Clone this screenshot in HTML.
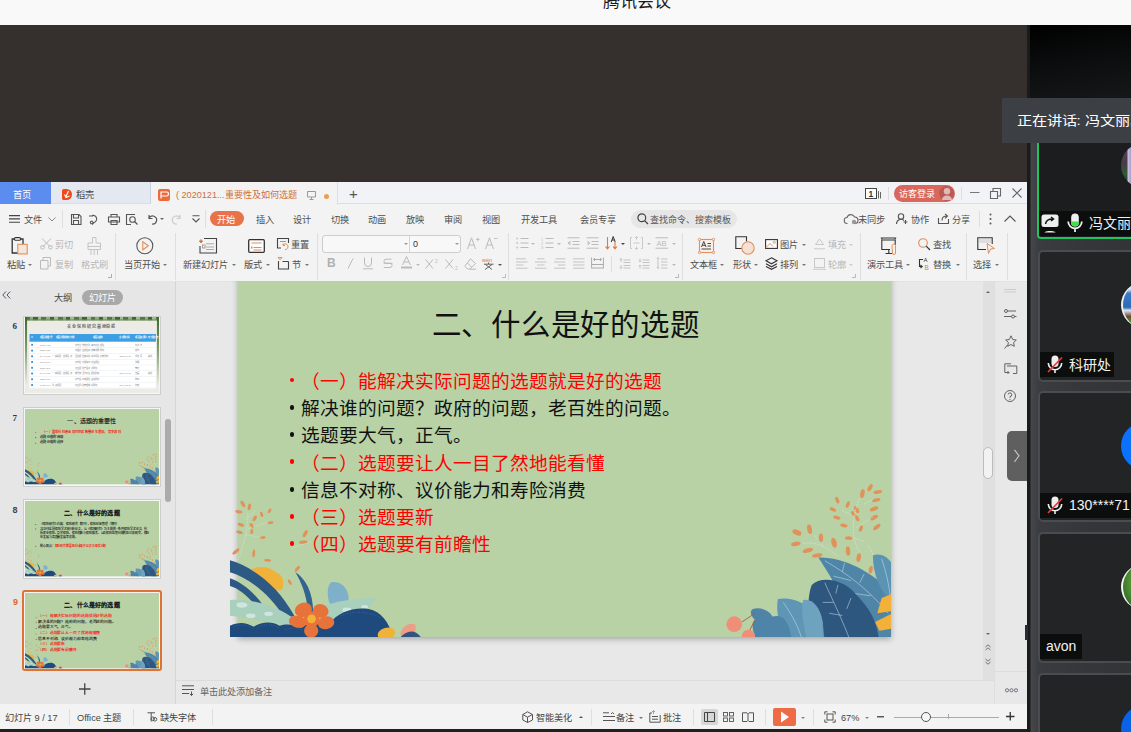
<!DOCTYPE html>
<html lang="zh-CN"><head><meta charset="utf-8">
<style>
*{box-sizing:border-box;margin:0;padding:0}
html,body{width:1131px;height:732px;overflow:hidden;background:#35302d;font-family:"Liberation Sans",sans-serif}
.a{position:absolute}
.t{position:absolute;white-space:nowrap;line-height:1}
.ui{font-size:9.2px;color:#4e4e4e;padding-top:1px}
.g{color:#b8b8b8}
.sep{position:absolute;width:1px;background:#dedede}
.dd{position:absolute;width:0;height:0;border-left:2px solid transparent;border-right:2px solid transparent;border-top:2px solid #777}
svg{position:absolute;overflow:visible}
</style></head><body>

<!-- top bar -->
<div class="a" style="left:0;top:0;width:1131px;height:25px;background:#f9f9f9"></div>
<div class="t" style="left:603px;top:-7px;font-size:17px;color:#1a1a1a">腾讯会议</div>
<!-- WPS -->
<div class="a" style="left:0;top:182px;width:1027px;height:546px;background:#f3f3f3"></div>
<!-- tab bar -->
<div class="a" style="left:0;top:182px;width:1027px;height:22px;background:#f2f3f7;border-bottom:1px solid #d9dee8"></div>
<div class="a" style="left:0;top:182px;width:51px;height:22px;background:#5b8cf0"></div>
<div class="t ui" style="left:13px;top:189.5px;color:#fff">首页</div>
<div class="a" style="left:51px;top:182px;width:100px;height:22px;background:#e4e8f0;border-right:1px solid #cdd3de;border-bottom:1px solid #d9dee8"></div>
<div class="a" style="left:62px;top:189px;width:10px;height:11px;background:#ef4a1c;border-radius:2px 6px 6px 2px"></div><svg style="left:62px;top:189px" width="10" height="11"><path d="M6.5 2L4 7.5M2.5 5.5L4 8.5L7.5 7" stroke="#fff" stroke-width="1.1" fill="none"/></svg>
<div class="t ui" style="left:76px;top:189.5px;color:#444">稻壳</div>
<div class="a" style="left:151px;top:182px;width:187px;height:23px;background:#f3f3f3;border-right:1px solid #d9dee8"></div>
<div class="a" style="left:158px;top:189px;width:12px;height:12px;background:#ec6a3e;border-radius:2px"></div><svg style="left:158px;top:189px" width="12" height="12"><path d="M3 9.5V3H8.5A2 2 0 0 1 8.5 7H3" stroke="#fff" stroke-width="1.2" fill="none"/></svg>
<div class="t ui" style="left:176px;top:190px;color:#d0703a;font-size:9.1px">( 2020121...重要性及如何选题</div>
<div class="a" style="left:324px;top:193.5px;width:5px;height:5px;border-radius:50%;background:#e8a050"></div>
<div class="t" style="left:349px;top:186px;font-size:15px;color:#555">+</div>
<!-- right of tab bar -->
<div class="a" style="left:894px;top:184.5px;width:61px;height:17.5px;background:#d9675a;border-radius:9px"></div>
<div class="t ui" style="left:898.5px;top:189px;color:#fff;font-size:9px">访客登录</div>
<div class="a" style="left:939px;top:186px;width:15px;height:15px;background:#b95a55;border-radius:50%"></div>
<div class="sep" style="left:888px;top:187px;height:13px"></div>
<div class="sep" style="left:961px;top:187px;height:13px"></div>

<!-- menu row -->
<div class="t ui" style="left:24px;top:215px">文件</div>
<div class="t ui" style="left:256px;top:215px">插入</div>
<div class="t ui" style="left:293px;top:215px">设计</div>
<div class="t ui" style="left:331px;top:215px">切换</div>
<div class="t ui" style="left:368px;top:215px">动画</div>
<div class="t ui" style="left:406px;top:215px">放映</div>
<div class="t ui" style="left:444px;top:215px">审阅</div>
<div class="t ui" style="left:482px;top:215px">视图</div>
<div class="t ui" style="left:521px;top:215px">开发工具</div>
<div class="t ui" style="left:580px;top:215px">会员专享</div>
<div class="a" style="left:210px;top:211px;width:34px;height:15px;background:#e8734a;border-radius:8px"></div>
<div class="t ui" style="left:217px;top:215px;color:#fff">开始</div>


<!-- menu row icons -->
<svg style="left:9px;top:215px" width="12" height="9"><path d="M0 .6H11M0 3.9H11M0 7.2H11" stroke="#444" stroke-width="1.1"/></svg>
<svg style="left:48px;top:217px" width="8" height="5"><path d="M.5 .5L4 4L7.5 .5" stroke="#888" fill="none" stroke-width="1"/></svg>
<div class="sep" style="left:62px;top:210px;height:18px"></div>
<svg style="left:70px;top:214px" width="12" height="11"><path d="M1.5 .5H9L11 2.5V10.5H1.5Z M3.5 .5V4H8.5V.5 M3.5 10.5V6.5H8.5V10.5" stroke="#555" fill="none" stroke-width="1.1"/></svg>
<svg style="left:89px;top:214px" width="11" height="11"><path d="M3 1.5A3.5 3.5 0 1 1 5 8.5M5 8.5L3 10.5 M0 2H4M3.5 7.5A1.3 1.3 0 1 0 3.6 7.6" stroke="#555" fill="none" stroke-width="1.1"/></svg>
<svg style="left:108px;top:214px" width="12" height="11"><path d="M3 3V.5H9V3 M.5 3H11.5V8H.5Z M3 6.5H9V10.5H3Z" stroke="#555" fill="none" stroke-width="1.1"/></svg>
<svg style="left:126px;top:214px" width="13" height="11"><path d="M9 .5H.5V10.5H5" stroke="#555" fill="none" stroke-width="1.1"/><circle cx="6.5" cy="5.5" r="2.8" stroke="#555" fill="none" stroke-width="1.1"/><path d="M8.5 7.5L11.5 10.5" stroke="#555" stroke-width="1.2"/></svg>
<svg style="left:147px;top:214px" width="10" height="11"><path d="M2 1V4.5H5.5 M2 4.3A4 4 0 1 1 5 10" stroke="#555" fill="none" stroke-width="1.2"/></svg>
<div class="dd" style="left:160px;top:218px;border-top-color:#666"></div>
<svg style="left:172px;top:214px" width="10" height="11"><path d="M8 1V4.5H4.5 M8 4.3A4 4 0 1 0 5 10" stroke="#ccc" fill="none" stroke-width="1.2"/></svg>
<svg style="left:192px;top:215px" width="8" height="8"><path d="M.5 .8H7.5 M.5 3.5L4 7L7.5 3.5" stroke="#555" fill="none" stroke-width="1.1"/></svg>
<div class="sep" style="left:205px;top:210px;height:18px"></div>
<!-- search pill -->
<div class="a" style="left:631px;top:210px;width:106px;height:18px;background:#e6e6e6;border-radius:9px"></div>
<svg style="left:637px;top:213px" width="12" height="12"><circle cx="4.8" cy="4.8" r="3.9" stroke="#444" fill="none" stroke-width="1.2"/><path d="M7.6 7.6L11 11" stroke="#444" stroke-width="1.3"/></svg>
<div class="t ui" style="left:650px;top:215px;color:#555;font-size:9px">查找命令、搜索模板</div>
<!-- right menu -->
<svg style="left:844px;top:213px" width="14" height="12"><path d="M3.5 10.5A3 3 0 0 1 3 4.5A4 4 0 0 1 10.5 4A3 3 0 0 1 11 10.5" stroke="#666" fill="none" stroke-width="1.1"/><circle cx="10" cy="9" r="2.2" fill="#999"/></svg>
<div class="t ui" style="left:858px;top:215px">未同步</div>
<svg style="left:896px;top:213px" width="12" height="12"><circle cx="5" cy="3.5" r="2.7" stroke="#555" fill="none" stroke-width="1.1"/><path d="M.5 11A4.5 4.5 0 0 1 8 7.5 M9.5 7V11 M7.5 9H11.5" stroke="#555" fill="none" stroke-width="1.1"/></svg>
<div class="t ui" style="left:911px;top:215px">协作</div>
<svg style="left:938px;top:213px" width="12" height="11"><path d="M.5 5V10.5H10.5V6 M4 7.5C4 4 6 3 9 3 M7 .8L9.5 3L7 5.3" stroke="#555" fill="none" stroke-width="1.1"/></svg>
<div class="t ui" style="left:952px;top:215px">分享</div>
<div class="sep" style="left:979px;top:211px;height:16px"></div>
<svg style="left:989px;top:213px" width="3" height="12"><circle cx="1.5" cy="1.5" r="1" fill="#555"/><circle cx="1.5" cy="6" r="1" fill="#555"/><circle cx="1.5" cy="10.5" r="1" fill="#555"/></svg>
<svg style="left:1004px;top:215px" width="12" height="7"><path d="M.5 6.5L6 1L11.5 6.5" stroke="#555" fill="none" stroke-width="1.1"/></svg>
<!-- tab bar right icons -->
<svg style="left:865px;top:188px" width="17" height="11"><rect x=".5" y=".5" width="11" height="10" stroke="#444" fill="#fff" stroke-width="1"/><text x="3.5" y="9" font-size="8.5" font-family="Liberation Sans" font-weight="bold" fill="#333">1</text><path d="M13.5 3V10.5M15.5 4V10.5" stroke="#666" stroke-width="1"/></svg>
<svg style="left:941px;top:187px" width="12" height="14"><circle cx="6" cy="4.3" r="3.2" fill="#e2b9b9"/><path d="M1 13A5 4.5 0 0 1 11 13Z" fill="#e2b9b9"/></svg>
<svg style="left:970px;top:192px" width="10" height="2"><path d="M0 .5H9.5" stroke="#777" stroke-width="1"/></svg>
<svg style="left:990px;top:188px" width="11" height="11"><path d="M.5 3.5H7.5V10.5H.5Z M3 3.5V.5H10.5V8H7.5" stroke="#666" fill="none" stroke-width="1.1"/></svg>
<svg style="left:1012px;top:188px" width="10" height="10"><path d="M.5 .5L9.5 9.5M9.5 .5L.5 9.5" stroke="#666" stroke-width="1.1"/></svg>
<svg style="left:307px;top:191px" width="9" height="9"><path d="M.5 .5H8.5V6H.5Z M4.5 6V8 M2.5 8.5H6.5" stroke="#999" fill="none" stroke-width="1"/></svg>


<!-- ===== TOOLBAR ===== -->
<!-- group1 clipboard -->
<svg style="left:11px;top:237px" width="17" height="18"><path d="M3 2H1.2V16H7" stroke="#333" fill="none" stroke-width="1.3"/><path d="M10 2H12V7" stroke="#333" fill="none" stroke-width="1.3"/><rect x="3.5" y=".6" width="6" height="2.6" rx="1" stroke="#333" fill="#fff" stroke-width="1.1"/><rect x="6.8" y="7.3" width="9.4" height="9.6" fill="#f5e6dc" stroke="#e0905a" stroke-width="1.1"/></svg>
<div class="t ui" style="left:7px;top:260px">粘贴</div><div class="dd" style="left:28px;top:264px"></div>
<svg style="left:40px;top:238px" width="13" height="12"><path d="M2 .5L10 8.5M11 .5L3 8.5" stroke="#bbb" stroke-width="1"/><circle cx="2.5" cy="9.3" r="1.8" stroke="#bbb" fill="none" stroke-width="1"/><circle cx="10.5" cy="9.3" r="1.8" stroke="#bbb" fill="none" stroke-width="1"/></svg>
<div class="t ui g" style="left:55px;top:240px">剪切</div>
<svg style="left:40px;top:257px" width="12" height="13"><path d="M3 3V.5H10.5V9H8 M.5 3.5H8V12H.5Z" stroke="#bbb" fill="none" stroke-width="1"/></svg>
<div class="t ui g" style="left:55px;top:260px">复制</div>
<svg style="left:87px;top:237px" width="15" height="19"><path d="M5.5 .5H9V6H13.5V12.5H1V6H5.5Z M1 9.5H13.5 M4 12.5V18M7.2 12.5V18M10.5 12.5V18" stroke="#c4c4c4" fill="none" stroke-width="1"/></svg>
<div class="t ui g" style="left:81px;top:260px">格式刷</div>
<svg style="left:108px;top:274px" width="4" height="4"><path d="M3.5 0V3.5H0" stroke="#999" fill="none" stroke-width=".8"/></svg>
<div class="sep" style="left:115px;top:233px;height:47px"></div>
<!-- group2 play -->
<svg style="left:136px;top:237px" width="18" height="18"><circle cx="8.8" cy="8.8" r="8" stroke="#555" fill="none" stroke-width="1.1"/><path d="M6.8 4.8L12.3 8.8L6.8 12.8Z" stroke="#e0905a" fill="none" stroke-width="1.1"/></svg>
<div class="t ui" style="left:124px;top:260px">当页开始</div><div class="dd" style="left:163px;top:264px"></div>
<div class="sep" style="left:175px;top:233px;height:47px"></div>
<!-- group3 slides -->
<svg style="left:199px;top:237px" width="19" height="17"><path d="M.5 4.5H3.5 M2 3V6 M5 1.5H17.5V16H1V9" stroke="#444" fill="none" stroke-width="1.1"/><path d="M0 4H4M2 2V6" stroke="#e0905a" stroke-width="1.1"/><rect x="3.5" y="8" width="2.5" height="3" stroke="#999" fill="none" stroke-width=".9"/><path d="M7 6.8H15M7 10H15M7 12.5H15" stroke="#aaa" stroke-width="1"/></svg>
<div class="t ui" style="left:183px;top:260px">新建幻灯片</div><div class="dd" style="left:232px;top:264px"></div>
<svg style="left:248px;top:239px" width="17" height="14"><rect x=".7" y=".7" width="15.6" height="12.6" rx="1" stroke="#333" fill="#fff" stroke-width="1.3"/><path d="M3.5 4H13.5M5.5 8.5H13.5M5.5 11H13.5" stroke="#e0905a" stroke-width="1.1"/><rect x="3" y="7.5" width="1.5" height="2" fill="#e0905a"/></svg>
<div class="t ui" style="left:244px;top:260px">版式</div><div class="dd" style="left:266px;top:264px"></div>
<svg style="left:277px;top:238px" width="13" height="12"><path d="M4 10H.5V.5H11.5V5" stroke="#444" fill="none" stroke-width="1.1"/><path d="M3 3.5H9" stroke="#999" stroke-width="1"/><path d="M6 7A2.8 2.8 0 1 1 8 11.5 M6 5.5V7.5H8" stroke="#e0905a" fill="none" stroke-width="1"/></svg>
<div class="t ui" style="left:291px;top:240px">重置</div>
<svg style="left:277px;top:257px" width="13" height="13"><path d="M1 .5H5L3 2.8Z" fill="none" stroke="#e0905a" stroke-width="1"/><path d="M1.5 4V12H11.5V4.5 M5.5 4.5H11.5" stroke="#444" fill="none" stroke-width="1.1"/></svg>
<div class="t ui" style="left:292px;top:260px">节</div><div class="dd" style="left:305px;top:264px"></div>
<div class="sep" style="left:317px;top:233px;height:47px"></div>
<!-- group4 font -->
<div class="a" style="left:322px;top:235px;width:139px;height:17.5px;background:#f8f8f8;border:1px solid #cdcdcd;border-radius:3px"></div>
<div class="a" style="left:409px;top:236px;width:1px;height:15.5px;background:#d6d6d6"></div>
<div class="dd" style="left:404px;top:243px;border-top-color:#999"></div>
<div class="dd" style="left:455px;top:243px;border-top-color:#999"></div>
<div class="t" style="left:413px;top:240px;font-size:9px;color:#333">0</div>
<svg style="left:467px;top:237px" width="13" height="13"><path d="M.5 12L4.5 .8L8.5 12M2 8H7" stroke="#bbb" fill="none" stroke-width="1"/><path d="M9 2.5H12.5M10.8 .8V4.2" stroke="#bbb" stroke-width=".9"/></svg>
<svg style="left:485px;top:237px" width="13" height="13"><path d="M.5 12L4.5 .8L8.5 12M2 8H7" stroke="#bbb" fill="none" stroke-width="1"/><path d="M9 1.5H12.5" stroke="#bbb" stroke-width=".9"/></svg>
<div class="t" style="left:327px;top:257px;font-size:12px;font-weight:bold;color:#b0b0b0">B</div>
<svg style="left:347px;top:258px" width="7" height="11"><path d="M6 .5L1 10.5" stroke="#bbb" stroke-width="1"/></svg>
<svg style="left:363px;top:257px" width="11" height="13"><path d="M1.5 .5V6A3.5 3.5 0 0 0 8.5 6V.5 M0 11.8H10" stroke="#bbb" fill="none" stroke-width="1"/></svg>
<svg style="left:383px;top:258px" width="10" height="11"><path d="M8.5 1.2H3A2 2 0 0 0 3 5.3H7A2 2 0 0 1 7 9.5H.8 M.5 5.3H9.5" stroke="#bbb" fill="none" stroke-width="1"/></svg>
<svg style="left:401px;top:256px" width="12" height="13"><path d="M1.5 9L5.5 .5L9.5 9M3 6H8" stroke="#bbb" fill="none" stroke-width="1"/><rect x="0" y="10.5" width="11" height="2" fill="#bbb"/></svg><div class="dd" style="left:416px;top:264px;border-top-color:#bbb"></div>
<svg style="left:425px;top:258px" width="14" height="11"><path d="M.5 1.5L8 10.5M8 1.5L.5 10.5" stroke="#bbb" stroke-width="1"/><text x="10" y="4.5" font-size="5" fill="#bbb" font-family="Liberation Sans">2</text></svg>
<svg style="left:445px;top:258px" width="14" height="12"><path d="M.5 1.5L8 10.5M8 1.5L.5 10.5" stroke="#bbb" stroke-width="1"/><text x="10" y="11.5" font-size="5" fill="#bbb" font-family="Liberation Sans">2</text></svg>
<svg style="left:464px;top:258px" width="13" height="12"><path d="M6.5 .8L11.5 5.5L6 11H3.5L.8 8.2Z M3.5 5L7.5 9 M5.5 11.2H12" stroke="#bbb" fill="none" stroke-width="1"/></svg>
<svg style="left:482px;top:256px" width="14" height="14"><text x="0" y="5.5" font-size="5.5" fill="#e07a40" font-family="Liberation Sans">wén</text><path d="M6.5 6.5V8 M2 8.2H11.5 M3.5 8.5L10 13.5 M10 8.5L3 13.5" stroke="#555" fill="none" stroke-width=".9"/></svg>
<div class="dd" style="left:498px;top:264px;border-top-color:#555"></div>
<svg style="left:502px;top:274px" width="4" height="4"><path d="M3.5 0V3.5H0" stroke="#aaa" fill="none" stroke-width=".8"/></svg>
<div class="sep" style="left:508px;top:233px;height:47px"></div>
<!-- group5 paragraph -->
<svg style="left:516px;top:237px" width="13" height="12"><circle cx="1.2" cy="1.5" r="1" fill="#c8c8c8"/><circle cx="1.2" cy="6" r="1" fill="#c8c8c8"/><circle cx="1.2" cy="10.5" r="1" fill="#c8c8c8"/><path d="M4.5 1.5H12.5M4.5 6H12.5M4.5 10.5H12.5" stroke="#bbb" stroke-width="1.1"/></svg><div class="dd" style="left:531px;top:243px;border-top-color:#bbb"></div>
<svg style="left:541px;top:237px" width="13" height="12"><text x="0" y="4" font-size="4" fill="#bbb" font-family="Liberation Sans">1</text><text x="0" y="8" font-size="4" fill="#bbb">2</text><text x="0" y="12" font-size="4" fill="#bbb">3</text><path d="M4.5 1.5H12.5M4.5 6H12.5M4.5 10.5H12.5" stroke="#bbb" stroke-width="1.1"/></svg><div class="dd" style="left:557px;top:243px;border-top-color:#bbb"></div>
<svg style="left:567px;top:237px" width="13" height="12"><path d="M.5 .8H12.5M5.5 4.5H12.5M5.5 7.5H12.5M.5 11.2H12.5 M3.5 4L1 6L3.5 8M1 6H4" stroke="#bbb" fill="none" stroke-width="1"/></svg>
<svg style="left:586px;top:237px" width="13" height="12"><path d="M.5 .8H12.5M5.5 4.5H12.5M5.5 7.5H12.5M.5 11.2H12.5 M1.5 4L4 6L1.5 8M1 6H4" stroke="#bbb" fill="none" stroke-width="1"/></svg>
<svg style="left:605px;top:236px" width="16" height="14"><path d="M2.5 1V12.5 M.5 10.5L2.5 12.8L4.5 10.5 M10 6V12.5 M8 10.5L10 12.8L12 10.5" stroke="#e07a40" fill="none" stroke-width="1.1"/><path d="M6.2 6L8.2 .5L10.2 6M7 4H9.5" stroke="#333" fill="none" stroke-width="1"/></svg><div class="dd" style="left:621px;top:243px;border-top-color:#444"></div>
<svg style="left:630px;top:236px" width="13" height="14"><path d="M2 1.5H.5V12.5H2 M11 1.5H12.5V12.5H11 M3.5 7H9.5 M6.5 .5V3.5M6.5 10.5V13.5 M5 2L6.5 .5L8 2 M5 12L6.5 13.5L8 12" stroke="#c4c4c4" fill="none" stroke-width=".9"/></svg><div class="dd" style="left:647px;top:243px;border-top-color:#bbb"></div>
<svg style="left:655px;top:237px" width="14" height="12"><path d="M.5 .8H13 M.5 11.2H13" stroke="#bbb" stroke-width="1"/><text x="1.5" y="9" font-size="7.5" fill="#bbb" font-family="Liberation Sans">AB</text></svg><div class="dd" style="left:672px;top:243px;border-top-color:#bbb"></div>
<svg style="left:516px;top:258px" width="12" height="11"><path d="M0 .8H10M0 4H11.5M0 7H7.5M0 10.2H11.5" stroke="#c4c4c4" stroke-width="1"/></svg>
<svg style="left:535px;top:258px" width="12" height="11"><path d="M2 .8H9.5M0 4H11.5M2 7H9.5M0 10.2H11.5" stroke="#c4c4c4" stroke-width="1"/></svg>
<svg style="left:554px;top:258px" width="12" height="11"><path d="M1.5 .8H11.5M0 4H11.5M4 7H11.5M0 10.2H11.5" stroke="#c4c4c4" stroke-width="1"/></svg>
<svg style="left:573px;top:258px" width="12" height="11"><path d="M0 .8H11.5M0 4H11.5M0 7H11.5M0 10.2H11.5" stroke="#c4c4c4" stroke-width="1"/></svg>
<svg style="left:591px;top:257px" width="13" height="12"><path d="M.6 .5V11.5M12.4 .5V11.5 M1 7.5H12M1 11H12 M3 2.5H10 M4 1L2.5 2.5L4 4 M9 1L10.5 2.5L9 4" stroke="#aaa" fill="none" stroke-width="1"/></svg>
<div class="sep" style="left:611px;top:256px;height:16px"></div>
<svg style="left:619px;top:258px" width="12" height="11"><path d="M4.5 2H11.5M4.5 4.5H11.5M4.5 7.5H11.5M4.5 10H11.5 M2 .5V4M.8 1.8L2 .5L3.2 1.8 M2 7V10.5M.8 9.2L2 10.5L3.2 9.2" stroke="#c4c4c4" fill="none" stroke-width="1"/></svg>
<svg style="left:638px;top:258px" width="12" height="11"><path d="M4.5 2H11.5M4.5 4.5H11.5M4.5 7.5H11.5M4.5 10H11.5 M2 .5V4M.8 2.8L2 4L3.2 2.8 M2 7V10.5M.8 8.2L2 7L3.2 8.2" stroke="#c4c4c4" fill="none" stroke-width="1"/></svg>
<svg style="left:656px;top:257px" width="12" height="12"><path d="M5 2H11.5M5 5H11.5M5 8H11.5M5 11H11.5 M2 .5V11.5M.8 1.8L2 .5L3.2 1.8M.8 10.2L2 11.5L3.2 10.2" stroke="#c4c4c4" fill="none" stroke-width="1"/></svg><div class="dd" style="left:672px;top:264px;border-top-color:#bbb"></div>
<svg style="left:675px;top:274px" width="4" height="4"><path d="M3.5 0V3.5H0" stroke="#aaa" fill="none" stroke-width=".8"/></svg>
<div class="sep" style="left:682px;top:233px;height:47px"></div>
<!-- group6 draw -->
<svg style="left:698px;top:238px" width="17" height="16"><rect x="1.5" y="1.5" width="14" height="13" stroke="#e0905a" fill="#f8f0ea" stroke-width="1.1"/><circle cx="1.5" cy="1.5" r="1.2" fill="#f3f3f3" stroke="#e0905a" stroke-width=".9"/><circle cx="15.5" cy="1.5" r="1.2" fill="#f3f3f3" stroke="#e0905a" stroke-width=".9"/><circle cx="1.5" cy="14.5" r="1.2" fill="#f3f3f3" stroke="#e0905a" stroke-width=".9"/><circle cx="15.5" cy="14.5" r="1.2" fill="#f3f3f3" stroke="#e0905a" stroke-width=".9"/><path d="M3.5 9L5.8 3.5L8 9M4.3 7.3H7.3 M9.5 5.5H13M9.5 8H13 M3.5 11H13" stroke="#333" fill="none" stroke-width=".9"/></svg>
<div class="t ui" style="left:690px;top:260px">文本框</div><div class="dd" style="left:720px;top:264px"></div>
<svg style="left:735px;top:236px" width="20" height="19"><path d="M8 12.5H.8V.8H11.5V5.5" stroke="#333" fill="none" stroke-width="1.1"/><circle cx="13" cy="12" r="6.2" stroke="#e0905a" fill="#f5e0d5" stroke-width="1.1"/></svg>
<div class="t ui" style="left:733px;top:260px">形状</div><div class="dd" style="left:754px;top:264px"></div>
<svg style="left:765px;top:239px" width="13" height="10"><rect x=".6" y=".6" width="11.8" height="8.8" stroke="#333" fill="#fff" stroke-width="1.1"/><path d="M1 8.5L5 4.5L8 7.5" stroke="#e0905a" fill="none" stroke-width="1"/><circle cx="9.3" cy="3.3" r="1.1" stroke="#e0905a" fill="none" stroke-width=".9"/></svg>
<div class="t ui" style="left:780px;top:240px">图片</div><div class="dd" style="left:802px;top:244px"></div>
<svg style="left:813px;top:238px" width="13" height="12"><path d="M2.5 6.5L6.5 1L10.5 6.5Z M1 10.8H12" stroke="#c8c8c8" fill="none" stroke-width="1"/></svg>
<div class="t ui g" style="left:828px;top:240px">填充</div><div class="dd" style="left:849px;top:244px;border-top-color:#ccc"></div>
<svg style="left:765px;top:257px" width="13" height="13"><path d="M6.5 .8L12 3.8L6.5 6.8L1 3.8Z" stroke="#333" fill="none" stroke-width="1.1"/><path d="M1 6.8L6.5 9.8L12 6.8 M1 9.5L6.5 12.3L12 9.5" stroke="#333" fill="none" stroke-width="1.1"/></svg>
<div class="t ui" style="left:780px;top:260px">排列</div><div class="dd" style="left:802px;top:264px"></div>
<svg style="left:813px;top:258px" width="13" height="12"><rect x="1.5" y=".5" width="10" height="9" stroke="#c8c8c8" fill="none" stroke-width="1"/><path d="M0 11.3H13" stroke="#c8c8c8" stroke-width="1"/></svg>
<div class="t ui g" style="left:828px;top:260px">轮廓</div><div class="dd" style="left:849px;top:264px;border-top-color:#ccc"></div>
<svg style="left:852px;top:274px" width="4" height="4"><path d="M3.5 0V3.5H0" stroke="#aaa" fill="none" stroke-width=".8"/></svg>
<div class="sep" style="left:860px;top:233px;height:47px"></div>
<!-- group7 -->
<svg style="left:880px;top:237px" width="18" height="18"><path d="M.8 1H16.2 M1.8 1.5V2.5 M15.2 1.5V2.5 M1.8 3H15.2 M1.8 3V12.5H10 M15.2 3V8 M5.5 16.5H12 M8.8 12.5V16.5" stroke="#333" fill="none" stroke-width="1.1"/><path d="M12 8.5A1.8 1.8 0 0 1 15.5 8.5V16A1.5 1.5 0 0 1 12.5 16Z" stroke="#e0905a" fill="#f3f3f3" stroke-width="1"/></svg>
<div class="t ui" style="left:867px;top:260px">演示工具</div><div class="dd" style="left:906px;top:264px"></div>
<svg style="left:918px;top:238px" width="13" height="13"><circle cx="5" cy="5" r="4.3" stroke="#e0905a" fill="none" stroke-width="1.1"/><path d="M8.2 8.2L12 12" stroke="#333" stroke-width="1.2"/></svg>
<div class="t ui" style="left:933px;top:240px">查找</div>
<svg style="left:918px;top:256px" width="13" height="15"><path d="M5 3.5H1.5V10.5H4 M2.5 9L4.2 10.5L2.5 12" stroke="#333" fill="none" stroke-width="1.1"/><text x="5.5" y="6" font-size="6" fill="#333" font-family="Liberation Sans">A</text><text x="6.5" y="14" font-size="6.5" fill="#e07a40" font-family="Liberation Sans">B</text></svg>
<div class="t ui" style="left:933px;top:260px">替换</div><div class="dd" style="left:956px;top:264px"></div>
<div class="sep" style="left:966px;top:233px;height:47px"></div>
<svg style="left:977px;top:237px" width="19" height="18"><path d="M9 12.5H.8V.8H15.2V7" stroke="#333" fill="none" stroke-width="1.1"/><rect x="2" y="2" width="12" height="4" fill="#ddd"/><path d="M10 6.5L17.5 11.5L13.5 12L11.5 16.5Z" stroke="#e0905a" fill="#f3f3f3" stroke-width="1"/></svg>
<div class="t ui" style="left:973px;top:260px">选择</div><div class="dd" style="left:995px;top:264px"></div>
<div class="sep" style="left:1007px;top:233px;height:47px"></div>


<!-- ===== MAIN AREA ===== -->
<div class="a" style="left:0;top:281px;width:1027px;height:423px;background:#e8e8e8"></div>
<div class="a" style="left:0;top:280.5px;width:1027px;height:1px;background:#e2e2e2"></div>
<!-- left panel -->
<div class="a" style="left:0;top:281px;width:175px;height:423px;background:#e6e6e6"></div>
<div class="a" style="left:175px;top:281px;width:1px;height:423px;background:#d6d6d6"></div>
<svg style="left:2px;top:291px" width="9" height="8"><path d="M4 .5L.8 4L4 7.5M8.2 .5L5 4L8.2 7.5" stroke="#556" fill="none" stroke-width="1"/></svg>
<div class="t ui" style="left:54px;top:293px;color:#444">大纲</div>
<div class="a" style="left:82px;top:290px;width:41px;height:15px;background:#a9a9a9;border-radius:8px"></div>
<div class="t ui" style="left:89px;top:293px;color:#fff">幻灯片</div>
<!-- thumbnails -->
<div class="t" style="left:12.5px;top:322px;font-size:9px;font-weight:bold;font-family:'Liberation Serif',serif;color:#333">6</div><div class="a" style="left:23px;top:315.5px;width:138px;height:79px;border:1px solid #cdcdcd;background:#f6f6f6"></div><div class="a" style="left:25px;top:317px;width:653px;height:370px;transform:scale(0.2052);transform-origin:0 0;overflow:hidden;background:#ecebe5"><div class="a" style="left:0;top:0;width:653px;height:16px;background:repeating-linear-gradient(90deg,#4e7a3e 0 23px,#8fb07a 23px 40px,#3f6536 40px 61px,#a5b995 61px 80px)"></div><div class="a" style="left:0;top:12px;width:653px;height:10px;background:linear-gradient(#6f8f5a,rgba(236,235,229,0))"></div><div class="a" style="left:0;top:0;width:10px;height:370px;background:linear-gradient(#3e6a2e,#7a9a68 40%,rgba(236,235,229,0) 90%)"></div><div class="a" style="left:643px;top:0;width:10px;height:370px;background:linear-gradient(#3e6a2e,#7a9a68 40%,rgba(236,235,229,0) 90%)"></div><div class="t" style="left:205px;top:38px;font-size:20px;letter-spacing:4px;color:#555;-webkit-text-stroke:.5px #555">农业保险研究基地简报</div><div class="a" style="left:22px;top:83px;width:616px;height:38px;background:#3d9fe3"></div><div class="a" style="left:22px;top:121px;width:616px;height:228px;background:#fff"></div><div class="t" style="left:30px;top:94px;font-size:12px;color:#e8f3fc;-webkit-text-stroke:.6px #e8f3fc">☐</div><div class="t" style="left:72px;top:94px;font-size:12px;color:#e8f3fc;-webkit-text-stroke:.6px #e8f3fc">项目批准号</div><div class="t" style="left:150px;top:94px;font-size:12px;color:#e8f3fc;-webkit-text-stroke:.6px #e8f3fc">项目类别</div><div class="t" style="left:195px;top:94px;font-size:12px;color:#e8f3fc;-webkit-text-stroke:.6px #e8f3fc">学科分类</div><div class="t" style="left:330px;top:94px;font-size:12px;color:#e8f3fc;-webkit-text-stroke:.6px #e8f3fc">项目名称</div><div class="t" style="left:460px;top:94px;font-size:12px;color:#e8f3fc;-webkit-text-stroke:.6px #e8f3fc">立项时间</div><div class="t" style="left:537px;top:94px;font-size:12px;color:#e8f3fc;-webkit-text-stroke:.6px #e8f3fc">项目负责人</div><div class="t" style="left:600px;top:94px;font-size:12px;color:#e8f3fc;-webkit-text-stroke:.6px #e8f3fc">专业职务</div><div class="a" style="left:30px;top:131px;width:9px;height:9px;background:#3a8fd8"></div><div class="t" style="left:72px;top:130px;font-size:11px;color:#888">17ZDA058</div><div class="t" style="left:243px;top:130px;font-size:11px;color:#888">农村土地制度改革与农业保险</div><div class="t" style="left:537px;top:130px;font-size:11px;color:#888">刘新华</div><div class="a" style="left:22px;top:149px;width:616px;height:2px;background:#e2e6ea"></div><div class="a" style="left:30px;top:159px;width:9px;height:9px;background:#3a8fd8"></div><div class="t" style="left:72px;top:158px;font-size:11px;color:#888">18BJY128</div><div class="t" style="left:243px;top:158px;font-size:11px;color:#888">中国农业保险高质量发展研究</div><div class="t" style="left:537px;top:158px;font-size:11px;color:#888">郑伟</div><div class="a" style="left:22px;top:177px;width:616px;height:2px;background:#e2e6ea"></div><div class="a" style="left:30px;top:187px;width:9px;height:9px;background:#3a8fd8"></div><div class="t" style="left:72px;top:186px;font-size:11px;color:#888">20AJY002</div><div class="t" style="left:134px;top:186px;font-size:11px;color:#888">一般项目</div><div class="t" style="left:185px;top:186px;font-size:11px;color:#888">应用经济</div><div class="t" style="left:243px;top:186px;font-size:11px;color:#888">巨灾保险体系建设与风险分散机制</div><div class="t" style="left:460px;top:186px;font-size:11px;color:#888">2020-09-15</div><div class="t" style="left:537px;top:186px;font-size:11px;color:#888">冯文丽</div><div class="t" style="left:600px;top:186px;font-size:11px;color:#888">教授</div><div class="a" style="left:22px;top:205px;width:616px;height:2px;background:#e2e6ea"></div><div class="a" style="left:30px;top:215px;width:9px;height:9px;background:#3a8fd8"></div><div class="t" style="left:72px;top:214px;font-size:11px;color:#888">19CJY045</div><div class="t" style="left:243px;top:214px;font-size:11px;color:#888">农村社会保障与农业保险</div><div class="t" style="left:537px;top:214px;font-size:11px;color:#888">张明</div><div class="a" style="left:22px;top:233px;width:616px;height:2px;background:#e2e6ea"></div><div class="a" style="left:30px;top:243px;width:9px;height:9px;background:#3a8fd8"></div><div class="t" style="left:72px;top:242px;font-size:11px;color:#888">21BJY201</div><div class="t" style="left:243px;top:242px;font-size:11px;color:#888">农业保险产品创新研究</div><div class="t" style="left:537px;top:242px;font-size:11px;color:#888">李华</div><div class="a" style="left:22px;top:261px;width:616px;height:2px;background:#e2e6ea"></div><div class="a" style="left:30px;top:271px;width:9px;height:9px;background:#3a8fd8"></div><div class="t" style="left:72px;top:270px;font-size:11px;color:#888">16AJY015</div><div class="t" style="left:134px;top:270px;font-size:11px;color:#888">一般项目</div><div class="t" style="left:185px;top:270px;font-size:11px;color:#888">应用经济</div><div class="t" style="left:243px;top:270px;font-size:11px;color:#888">粮食安全与农业保险政策</div><div class="t" style="left:460px;top:270px;font-size:11px;color:#888">2016-07-11</div><div class="t" style="left:537px;top:270px;font-size:11px;color:#888">王磊</div><div class="t" style="left:600px;top:270px;font-size:11px;color:#888">教授</div><div class="a" style="left:22px;top:289px;width:616px;height:2px;background:#e2e6ea"></div><div class="a" style="left:30px;top:299px;width:9px;height:9px;background:#3a8fd8"></div><div class="t" style="left:72px;top:298px;font-size:11px;color:#888">15BJY099</div><div class="t" style="left:243px;top:298px;font-size:11px;color:#888">农产品价格保险试点研究</div><div class="t" style="left:537px;top:298px;font-size:11px;color:#888">陈红</div><div class="a" style="left:22px;top:317px;width:616px;height:2px;background:#e2e6ea"></div><div class="a" style="left:30px;top:327px;width:9px;height:9px;background:#3a8fd8"></div><div class="t" style="left:72px;top:326px;font-size:11px;color:#888">14ZDA041</div><div class="t" style="left:134px;top:326px;font-size:11px;color:#888">重点项目</div><div class="t" style="left:243px;top:326px;font-size:11px;color:#888">农业风险管理体系研究</div><div class="t" style="left:460px;top:326px;font-size:11px;color:#888">2014-12-01</div><div class="t" style="left:537px;top:326px;font-size:11px;color:#888">刘宏</div><div class="a" style="left:22px;top:345px;width:616px;height:2px;background:#e2e6ea"></div></div>
<div class="t" style="left:12.5px;top:414px;font-size:9px;font-weight:bold;font-family:'Liberation Serif',serif;color:#333">7</div><div class="a" style="left:23px;top:407px;width:138px;height:80px;border:1px solid #cdcdcd;background:#f6f6f6"></div><div class="a" style="left:25px;top:409px;width:653px;height:367px;transform:scale(0.2052);transform-origin:0 0;overflow:hidden;background:#b8d2a6"><svg style="left:-12px;top:226px" width="210" height="145" viewBox="0 0 1060 732">
 <g fill="#e0925a">
  <ellipse cx="85" cy="45" rx="9" ry="18" transform="rotate(-30 85 45)"/>
  <ellipse cx="118" cy="60" rx="8" ry="17" transform="rotate(10 118 60)"/>
  <ellipse cx="65" cy="85" rx="18" ry="8" transform="rotate(10 65 85)"/>
  <ellipse cx="145" cy="118" rx="8" ry="16" transform="rotate(30 145 118)"/>
  <ellipse cx="180" cy="98" rx="7" ry="14" transform="rotate(-20 180 98)"/>
  <ellipse cx="220" cy="80" rx="7" ry="13" transform="rotate(30 220 80)"/>
  <ellipse cx="75" cy="150" rx="17" ry="8" transform="rotate(20 75 150)"/>
  <ellipse cx="130" cy="155" rx="8" ry="15" transform="rotate(-30 130 155)"/>
  <ellipse cx="225" cy="140" rx="15" ry="7" transform="rotate(-10 225 140)"/>
  <ellipse cx="68" cy="188" rx="17" ry="8" transform="rotate(15 68 188)"/>
  <ellipse cx="130" cy="185" rx="7" ry="13" transform="rotate(10 130 185)"/>
  <ellipse cx="185" cy="215" rx="16" ry="7" transform="rotate(-5 185 215)"/>
  <ellipse cx="50" cy="285" rx="8" ry="22" transform="rotate(50 50 285)"/>
  <ellipse cx="140" cy="295" rx="7" ry="20" transform="rotate(5 140 295)"/>
  <ellipse cx="210" cy="330" rx="18" ry="7" transform="rotate(5 210 330)"/>
  <ellipse cx="400" cy="195" rx="9" ry="20" transform="rotate(30 400 195)"/>
  <ellipse cx="390" cy="238" rx="22" ry="8" transform="rotate(-5 390 238)"/>
  <ellipse cx="360" cy="372" rx="8" ry="18" transform="rotate(40 360 372)"/>
  <ellipse cx="322" cy="440" rx="7" ry="15" transform="rotate(-30 322 440)"/>
 </g>
 <g stroke="#dfeee8" stroke-width="3" stroke-dasharray="8 6" fill="none" opacity=".8">
  <path d="M60 330C90 250 110 180 110 90M110 170L200 140M100 120L150 80M100 200L180 215"/>
  <path d="M330 270L430 235"/>
 </g>
 <path d="M120 380C160 355 220 360 250 390C290 400 300 450 280 480C240 490 180 470 150 440C120 420 110 400 120 380Z" fill="#f1b23a"/>
 <path d="M20 330C120 360 250 440 345 610L300 625C220 500 120 420 20 390Z" fill="#2d5a85"/>
 <path d="M20 420C80 440 140 490 190 560L160 570C110 510 60 470 20 460Z" fill="#2d5a85"/>
 <path d="M20 530C120 520 260 560 350 630L330 670C220 640 100 620 20 610Z" fill="#a9cfbd"/>
 <g fill="#cfe6dc"><ellipse cx="80" cy="555" rx="28" ry="14"/><ellipse cx="125" cy="610" rx="24" ry="12"/><ellipse cx="215" cy="600" rx="22" ry="11"/></g>
 <path d="M350 390C400 420 440 490 440 590L415 590C405 500 380 440 350 390Z" fill="#33648f"/>
 <path d="M530 440C600 430 630 500 615 550C590 580 540 570 520 540C510 500 510 460 530 440Z" fill="#7fb0c9"/>
 <path d="M470 570C560 530 680 520 760 520C720 580 650 640 560 660C520 640 490 610 470 570Z" fill="#a9cfbd"/>
 <g fill="#cfe6dc"><ellipse cx="610" cy="580" rx="22" ry="12"/><ellipse cx="700" cy="565" rx="18" ry="10"/><ellipse cx="575" cy="635" rx="14" ry="8"/></g>
 <path d="M20 660C60 640 100 640 140 665C180 640 230 635 270 660C300 650 340 650 380 670C420 640 470 640 520 650C570 590 640 565 720 575C790 590 830 650 850 745L20 745Z" fill="#1f4a7d"/>
 <g stroke="#9fc3dc" stroke-width="3" stroke-dasharray="2 10" fill="none" opacity=".8">
  <path d="M40 665C70 650 110 655 135 675M160 670C190 650 235 650 265 670M580 610C640 585 720 585 780 620M300 680C340 665 370 672 390 690"/>
 </g>
 <g fill="#e8733a">
  <ellipse cx="390" cy="580" rx="44" ry="36" transform="rotate(-20 390 580)"/>
  <ellipse cx="478" cy="585" rx="40" ry="34" transform="rotate(20 478 585)"/>
  <ellipse cx="362" cy="640" rx="45" ry="30" transform="rotate(10 362 640)"/>
  <ellipse cx="505" cy="645" rx="42" ry="32" transform="rotate(-10 505 645)"/>
  <ellipse cx="430" cy="685" rx="36" ry="34"/>
  <circle cx="432" cy="628" r="40"/>
 </g>
 <circle cx="432" cy="625" r="22" fill="#f3b237"/>
 <ellipse cx="810" cy="700" rx="45" ry="30" fill="#f1b23a" transform="rotate(-15 810 700)"/>
 <path d="M880 700C890 660 930 640 955 655C965 690 940 745 900 745Z" fill="#ef9c86"/>
 <path d="M860 745C900 680 960 660 1000 745Z" fill="#1f4a7d" opacity=".9"/>
</svg><svg style="left:482px;top:211px" width="180" height="160" viewBox="0 0 824 732">
 <g fill="#e0925a">
  <ellipse cx="352" cy="240" rx="22" ry="12" transform="rotate(25 352 240)"/>
  <ellipse cx="410" cy="225" rx="11" ry="22" transform="rotate(-10 410 225)"/>
  <ellipse cx="462" cy="265" rx="10" ry="20"/>
  <ellipse cx="522" cy="287" rx="12" ry="24" transform="rotate(-15 522 287)"/>
  <ellipse cx="347" cy="292" rx="22" ry="10" transform="rotate(-10 347 292)"/>
  <ellipse cx="402" cy="322" rx="25" ry="10" transform="rotate(-15 402 322)"/>
  <ellipse cx="445" cy="345" rx="24" ry="9" transform="rotate(-10 445 345)"/>
  <ellipse cx="586" cy="325" rx="10" ry="22" transform="rotate(-5 586 325)"/>
  <ellipse cx="635" cy="355" rx="10" ry="20" transform="rotate(10 635 355)"/>
  <ellipse cx="690" cy="410" rx="9" ry="18" transform="rotate(10 690 410)"/>
  <ellipse cx="537" cy="92" rx="8" ry="16" transform="rotate(-20 537 92)"/>
  <ellipse cx="585" cy="112" rx="8" ry="16" transform="rotate(20 585 112)"/>
  <ellipse cx="517" cy="135" rx="16" ry="8" transform="rotate(25 517 135)"/>
  <ellipse cx="535" cy="172" rx="17" ry="8" transform="rotate(15 535 172)"/>
  <ellipse cx="567" cy="208" rx="17" ry="8" transform="rotate(10 567 208)"/>
  <ellipse cx="625" cy="135" rx="9" ry="18" transform="rotate(-30 625 135)"/>
  <ellipse cx="628" cy="175" rx="8" ry="15" transform="rotate(-30 628 175)"/>
  <ellipse cx="645" cy="222" rx="8" ry="15" transform="rotate(20 645 222)"/>
  <ellipse cx="590" cy="265" rx="18" ry="8"/>
  <ellipse cx="652" cy="62" rx="10" ry="20" transform="rotate(10 652 62)"/>
  <ellipse cx="687" cy="35" rx="9" ry="18" transform="rotate(30 687 35)"/>
  <ellipse cx="722" cy="55" rx="20" ry="8" transform="rotate(-10 722 55)"/>
  <ellipse cx="715" cy="92" rx="20" ry="8" transform="rotate(-15 715 92)"/>
  <ellipse cx="705" cy="132" rx="20" ry="9" transform="rotate(-20 705 132)"/>
  <ellipse cx="705" cy="172" rx="20" ry="9" transform="rotate(-30 705 172)"/>
  <ellipse cx="718" cy="215" rx="20" ry="9" transform="rotate(-40 718 215)"/>
  <ellipse cx="610" cy="155" rx="8" ry="14" transform="rotate(-30 610 155)"/>
 </g>
 <g stroke="#dfeee8" stroke-width="3" stroke-dasharray="8 5" fill="none" opacity=".85">
  <path d="M640 330C600 270 600 180 640 80M660 110L700 90M620 220L700 170M560 140L620 170M600 260L660 280M680 300L700 340"/>
  <path d="M540 350C480 300 430 280 380 290M470 300L430 250"/>
 </g>
 <path d="M450 355C560 350 700 420 790 520L790 745L620 745C600 600 520 460 450 355Z" fill="#4f86a8"/>
 <path d="M700 345C740 330 790 360 800 420L790 560C740 520 700 440 700 345Z" fill="#5b93b3"/>
 <path d="M420 480C460 440 560 450 620 520C700 600 720 660 730 745L410 745C400 620 400 530 420 480Z" fill="#2e5780"/>
 <path d="M265 545C340 530 430 580 470 650L480 745L300 745C270 660 255 600 265 545Z" fill="#5f96b5"/>
 <path d="M380 550C420 540 460 580 470 650L470 745L400 745C380 650 370 600 380 550Z" fill="#6ea3c0"/>
 <path d="M150 590C190 580 230 600 240 625C290 610 320 650 330 745L170 745C150 690 140 660 160 640C140 620 135 600 150 590Z" fill="#4d84a8"/>
 <g stroke="#cfe3ee" stroke-width="3" fill="none" opacity=".8">
  <path d="M480 370C570 420 680 500 770 610M560 420L570 380M640 470L660 430M600 460L520 440M690 530L620 520"/>
  <path d="M480 470C520 560 560 640 600 745M520 560L470 560M560 620L500 610M530 520L540 480M580 590L600 540"/>
  <path d="M290 560C330 620 360 670 380 745M740 360C760 420 775 480 780 540"/>
 </g>
 <g fill="#f3b237"><path d="M740 540L790 520L790 600L720 610Z"/><path d="M710 650L790 610L790 680L730 690Z"/></g>
 <path d="M100 650L160 610M130 700L160 640" stroke="#b0553a" stroke-width="4" fill="none"/>
 <circle cx="65" cy="660" r="36" fill="#ef8f78"/>
 <circle cx="130" cy="715" r="30" fill="#ef8f78"/>
</svg><div class="t" style="left:0;width:653px;text-align:center;top:41px;font-size:29.5px;color:#111;-webkit-text-stroke:0.5px #111">一、选题的重要性</div><div class="a" style="left:50.0px;top:111.9px;width:4.5px;height:4.5px;border-radius:50%;background:#f00"></div><div class="t" style="left:74px;top:102px;font-size:16px;color:#f00;-webkit-text-stroke:0.3px #f00">&nbsp;&nbsp;（一）国家社科基金项目申报数量逐年增加，竞争激烈</div><div class="a" style="left:50.0px;top:137.9px;width:4.5px;height:4.5px;border-radius:50%;background:#111"></div><div class="t" style="left:74px;top:128px;font-size:16px;color:#111;-webkit-text-stroke:0.3px #111">选题价值的体现</div><div class="a" style="left:50.0px;top:163.9px;width:4.5px;height:4.5px;border-radius:50%;background:#111"></div><div class="t" style="left:74px;top:154px;font-size:16px;color:#111;-webkit-text-stroke:0.3px #111">选题价值的选择</div></div><div class="t" style="left:12.5px;top:506px;font-size:9px;font-weight:bold;color:#444">8</div><div class="a" style="left:23px;top:499px;width:138px;height:80px;border:1px solid #cdcdcd;background:#f6f6f6"></div><div class="a" style="left:25px;top:501px;width:653px;height:367px;transform:scale(0.2052);transform-origin:0 0;overflow:hidden;background:#b8d2a6"><svg style="left:-12px;top:226px" width="210" height="145" viewBox="0 0 1060 732">
 <g fill="#e0925a">
  <ellipse cx="85" cy="45" rx="9" ry="18" transform="rotate(-30 85 45)"/>
  <ellipse cx="118" cy="60" rx="8" ry="17" transform="rotate(10 118 60)"/>
  <ellipse cx="65" cy="85" rx="18" ry="8" transform="rotate(10 65 85)"/>
  <ellipse cx="145" cy="118" rx="8" ry="16" transform="rotate(30 145 118)"/>
  <ellipse cx="180" cy="98" rx="7" ry="14" transform="rotate(-20 180 98)"/>
  <ellipse cx="220" cy="80" rx="7" ry="13" transform="rotate(30 220 80)"/>
  <ellipse cx="75" cy="150" rx="17" ry="8" transform="rotate(20 75 150)"/>
  <ellipse cx="130" cy="155" rx="8" ry="15" transform="rotate(-30 130 155)"/>
  <ellipse cx="225" cy="140" rx="15" ry="7" transform="rotate(-10 225 140)"/>
  <ellipse cx="68" cy="188" rx="17" ry="8" transform="rotate(15 68 188)"/>
  <ellipse cx="130" cy="185" rx="7" ry="13" transform="rotate(10 130 185)"/>
  <ellipse cx="185" cy="215" rx="16" ry="7" transform="rotate(-5 185 215)"/>
  <ellipse cx="50" cy="285" rx="8" ry="22" transform="rotate(50 50 285)"/>
  <ellipse cx="140" cy="295" rx="7" ry="20" transform="rotate(5 140 295)"/>
  <ellipse cx="210" cy="330" rx="18" ry="7" transform="rotate(5 210 330)"/>
  <ellipse cx="400" cy="195" rx="9" ry="20" transform="rotate(30 400 195)"/>
  <ellipse cx="390" cy="238" rx="22" ry="8" transform="rotate(-5 390 238)"/>
  <ellipse cx="360" cy="372" rx="8" ry="18" transform="rotate(40 360 372)"/>
  <ellipse cx="322" cy="440" rx="7" ry="15" transform="rotate(-30 322 440)"/>
 </g>
 <g stroke="#dfeee8" stroke-width="3" stroke-dasharray="8 6" fill="none" opacity=".8">
  <path d="M60 330C90 250 110 180 110 90M110 170L200 140M100 120L150 80M100 200L180 215"/>
  <path d="M330 270L430 235"/>
 </g>
 <path d="M120 380C160 355 220 360 250 390C290 400 300 450 280 480C240 490 180 470 150 440C120 420 110 400 120 380Z" fill="#f1b23a"/>
 <path d="M20 330C120 360 250 440 345 610L300 625C220 500 120 420 20 390Z" fill="#2d5a85"/>
 <path d="M20 420C80 440 140 490 190 560L160 570C110 510 60 470 20 460Z" fill="#2d5a85"/>
 <path d="M20 530C120 520 260 560 350 630L330 670C220 640 100 620 20 610Z" fill="#a9cfbd"/>
 <g fill="#cfe6dc"><ellipse cx="80" cy="555" rx="28" ry="14"/><ellipse cx="125" cy="610" rx="24" ry="12"/><ellipse cx="215" cy="600" rx="22" ry="11"/></g>
 <path d="M350 390C400 420 440 490 440 590L415 590C405 500 380 440 350 390Z" fill="#33648f"/>
 <path d="M530 440C600 430 630 500 615 550C590 580 540 570 520 540C510 500 510 460 530 440Z" fill="#7fb0c9"/>
 <path d="M470 570C560 530 680 520 760 520C720 580 650 640 560 660C520 640 490 610 470 570Z" fill="#a9cfbd"/>
 <g fill="#cfe6dc"><ellipse cx="610" cy="580" rx="22" ry="12"/><ellipse cx="700" cy="565" rx="18" ry="10"/><ellipse cx="575" cy="635" rx="14" ry="8"/></g>
 <path d="M20 660C60 640 100 640 140 665C180 640 230 635 270 660C300 650 340 650 380 670C420 640 470 640 520 650C570 590 640 565 720 575C790 590 830 650 850 745L20 745Z" fill="#1f4a7d"/>
 <g stroke="#9fc3dc" stroke-width="3" stroke-dasharray="2 10" fill="none" opacity=".8">
  <path d="M40 665C70 650 110 655 135 675M160 670C190 650 235 650 265 670M580 610C640 585 720 585 780 620M300 680C340 665 370 672 390 690"/>
 </g>
 <g fill="#e8733a">
  <ellipse cx="390" cy="580" rx="44" ry="36" transform="rotate(-20 390 580)"/>
  <ellipse cx="478" cy="585" rx="40" ry="34" transform="rotate(20 478 585)"/>
  <ellipse cx="362" cy="640" rx="45" ry="30" transform="rotate(10 362 640)"/>
  <ellipse cx="505" cy="645" rx="42" ry="32" transform="rotate(-10 505 645)"/>
  <ellipse cx="430" cy="685" rx="36" ry="34"/>
  <circle cx="432" cy="628" r="40"/>
 </g>
 <circle cx="432" cy="625" r="22" fill="#f3b237"/>
 <ellipse cx="810" cy="700" rx="45" ry="30" fill="#f1b23a" transform="rotate(-15 810 700)"/>
 <path d="M880 700C890 660 930 640 955 655C965 690 940 745 900 745Z" fill="#ef9c86"/>
 <path d="M860 745C900 680 960 660 1000 745Z" fill="#1f4a7d" opacity=".9"/>
</svg><svg style="left:482px;top:211px" width="180" height="160" viewBox="0 0 824 732">
 <g fill="#e0925a">
  <ellipse cx="352" cy="240" rx="22" ry="12" transform="rotate(25 352 240)"/>
  <ellipse cx="410" cy="225" rx="11" ry="22" transform="rotate(-10 410 225)"/>
  <ellipse cx="462" cy="265" rx="10" ry="20"/>
  <ellipse cx="522" cy="287" rx="12" ry="24" transform="rotate(-15 522 287)"/>
  <ellipse cx="347" cy="292" rx="22" ry="10" transform="rotate(-10 347 292)"/>
  <ellipse cx="402" cy="322" rx="25" ry="10" transform="rotate(-15 402 322)"/>
  <ellipse cx="445" cy="345" rx="24" ry="9" transform="rotate(-10 445 345)"/>
  <ellipse cx="586" cy="325" rx="10" ry="22" transform="rotate(-5 586 325)"/>
  <ellipse cx="635" cy="355" rx="10" ry="20" transform="rotate(10 635 355)"/>
  <ellipse cx="690" cy="410" rx="9" ry="18" transform="rotate(10 690 410)"/>
  <ellipse cx="537" cy="92" rx="8" ry="16" transform="rotate(-20 537 92)"/>
  <ellipse cx="585" cy="112" rx="8" ry="16" transform="rotate(20 585 112)"/>
  <ellipse cx="517" cy="135" rx="16" ry="8" transform="rotate(25 517 135)"/>
  <ellipse cx="535" cy="172" rx="17" ry="8" transform="rotate(15 535 172)"/>
  <ellipse cx="567" cy="208" rx="17" ry="8" transform="rotate(10 567 208)"/>
  <ellipse cx="625" cy="135" rx="9" ry="18" transform="rotate(-30 625 135)"/>
  <ellipse cx="628" cy="175" rx="8" ry="15" transform="rotate(-30 628 175)"/>
  <ellipse cx="645" cy="222" rx="8" ry="15" transform="rotate(20 645 222)"/>
  <ellipse cx="590" cy="265" rx="18" ry="8"/>
  <ellipse cx="652" cy="62" rx="10" ry="20" transform="rotate(10 652 62)"/>
  <ellipse cx="687" cy="35" rx="9" ry="18" transform="rotate(30 687 35)"/>
  <ellipse cx="722" cy="55" rx="20" ry="8" transform="rotate(-10 722 55)"/>
  <ellipse cx="715" cy="92" rx="20" ry="8" transform="rotate(-15 715 92)"/>
  <ellipse cx="705" cy="132" rx="20" ry="9" transform="rotate(-20 705 132)"/>
  <ellipse cx="705" cy="172" rx="20" ry="9" transform="rotate(-30 705 172)"/>
  <ellipse cx="718" cy="215" rx="20" ry="9" transform="rotate(-40 718 215)"/>
  <ellipse cx="610" cy="155" rx="8" ry="14" transform="rotate(-30 610 155)"/>
 </g>
 <g stroke="#dfeee8" stroke-width="3" stroke-dasharray="8 5" fill="none" opacity=".85">
  <path d="M640 330C600 270 600 180 640 80M660 110L700 90M620 220L700 170M560 140L620 170M600 260L660 280M680 300L700 340"/>
  <path d="M540 350C480 300 430 280 380 290M470 300L430 250"/>
 </g>
 <path d="M450 355C560 350 700 420 790 520L790 745L620 745C600 600 520 460 450 355Z" fill="#4f86a8"/>
 <path d="M700 345C740 330 790 360 800 420L790 560C740 520 700 440 700 345Z" fill="#5b93b3"/>
 <path d="M420 480C460 440 560 450 620 520C700 600 720 660 730 745L410 745C400 620 400 530 420 480Z" fill="#2e5780"/>
 <path d="M265 545C340 530 430 580 470 650L480 745L300 745C270 660 255 600 265 545Z" fill="#5f96b5"/>
 <path d="M380 550C420 540 460 580 470 650L470 745L400 745C380 650 370 600 380 550Z" fill="#6ea3c0"/>
 <path d="M150 590C190 580 230 600 240 625C290 610 320 650 330 745L170 745C150 690 140 660 160 640C140 620 135 600 150 590Z" fill="#4d84a8"/>
 <g stroke="#cfe3ee" stroke-width="3" fill="none" opacity=".8">
  <path d="M480 370C570 420 680 500 770 610M560 420L570 380M640 470L660 430M600 460L520 440M690 530L620 520"/>
  <path d="M480 470C520 560 560 640 600 745M520 560L470 560M560 620L500 610M530 520L540 480M580 590L600 540"/>
  <path d="M290 560C330 620 360 670 380 745M740 360C760 420 775 480 780 540"/>
 </g>
 <g fill="#f3b237"><path d="M740 540L790 520L790 600L720 610Z"/><path d="M710 650L790 610L790 680L730 690Z"/></g>
 <path d="M100 650L160 610M130 700L160 640" stroke="#b0553a" stroke-width="4" fill="none"/>
 <circle cx="65" cy="660" r="36" fill="#ef8f78"/>
 <circle cx="130" cy="715" r="30" fill="#ef8f78"/>
</svg><div class="t" style="left:0;width:653px;text-align:center;top:41px;font-size:29.5px;color:#111;-webkit-text-stroke:1.5px #111">二、什么是好的选题</div><div class="a" style="left:50.0px;top:112.7px;width:4.5px;height:4.5px;border-radius:50%;background:#111"></div><div class="a" style="left:74px;top:104px;width:535px;font-size:14px;line-height:21px;color:#111;-webkit-text-stroke:0.3px #111">《保险研究》约稿：保险研究（期刊）、保险经营管理（期刊）</div><div class="a" style="left:50.0px;top:133.7px;width:4.5px;height:4.5px;border-radius:50%;background:#111"></div><div class="a" style="left:74px;top:125px;width:535px;font-size:14px;line-height:21px;color:#111;-webkit-text-stroke:0.3px #111">2019年全国保险学术研讨会征文，以《保险研究》为主题的一系列保险学术论文，包括农业保险、巨灾保险、保险创新与保险服务、以及保险监管问题的探讨和研究，保险业发展与高质量发展等议题。</div><div class="a" style="left:50.0px;top:217.7px;width:4.5px;height:4.5px;border-radius:50%;background:#111"></div><div class="a" style="left:74px;top:209px;width:535px;font-size:14px;line-height:21px;color:#111;-webkit-text-stroke:0.3px #111">核心观点：<span style="color:#f00;-webkit-text-stroke:0.3px #f00">保险研究需要面向未来并且关注现实问题</span></div></div><div class="t" style="left:13px;top:598px;font-size:9px;font-weight:bold;color:#d9682a">9</div><div class="a" style="left:22px;top:590px;width:140px;height:81px;border:2px solid #de7338;border-radius:3px;background:#fbf3ee"></div><div class="a" style="left:25px;top:593px;width:653px;height:367px;transform:scale(0.2052);transform-origin:0 0;overflow:hidden;background:#b8d2a6"><svg style="left:-12px;top:226px" width="210" height="145" viewBox="0 0 1060 732">
 <g fill="#e0925a">
  <ellipse cx="85" cy="45" rx="9" ry="18" transform="rotate(-30 85 45)"/>
  <ellipse cx="118" cy="60" rx="8" ry="17" transform="rotate(10 118 60)"/>
  <ellipse cx="65" cy="85" rx="18" ry="8" transform="rotate(10 65 85)"/>
  <ellipse cx="145" cy="118" rx="8" ry="16" transform="rotate(30 145 118)"/>
  <ellipse cx="180" cy="98" rx="7" ry="14" transform="rotate(-20 180 98)"/>
  <ellipse cx="220" cy="80" rx="7" ry="13" transform="rotate(30 220 80)"/>
  <ellipse cx="75" cy="150" rx="17" ry="8" transform="rotate(20 75 150)"/>
  <ellipse cx="130" cy="155" rx="8" ry="15" transform="rotate(-30 130 155)"/>
  <ellipse cx="225" cy="140" rx="15" ry="7" transform="rotate(-10 225 140)"/>
  <ellipse cx="68" cy="188" rx="17" ry="8" transform="rotate(15 68 188)"/>
  <ellipse cx="130" cy="185" rx="7" ry="13" transform="rotate(10 130 185)"/>
  <ellipse cx="185" cy="215" rx="16" ry="7" transform="rotate(-5 185 215)"/>
  <ellipse cx="50" cy="285" rx="8" ry="22" transform="rotate(50 50 285)"/>
  <ellipse cx="140" cy="295" rx="7" ry="20" transform="rotate(5 140 295)"/>
  <ellipse cx="210" cy="330" rx="18" ry="7" transform="rotate(5 210 330)"/>
  <ellipse cx="400" cy="195" rx="9" ry="20" transform="rotate(30 400 195)"/>
  <ellipse cx="390" cy="238" rx="22" ry="8" transform="rotate(-5 390 238)"/>
  <ellipse cx="360" cy="372" rx="8" ry="18" transform="rotate(40 360 372)"/>
  <ellipse cx="322" cy="440" rx="7" ry="15" transform="rotate(-30 322 440)"/>
 </g>
 <g stroke="#dfeee8" stroke-width="3" stroke-dasharray="8 6" fill="none" opacity=".8">
  <path d="M60 330C90 250 110 180 110 90M110 170L200 140M100 120L150 80M100 200L180 215"/>
  <path d="M330 270L430 235"/>
 </g>
 <path d="M120 380C160 355 220 360 250 390C290 400 300 450 280 480C240 490 180 470 150 440C120 420 110 400 120 380Z" fill="#f1b23a"/>
 <path d="M20 330C120 360 250 440 345 610L300 625C220 500 120 420 20 390Z" fill="#2d5a85"/>
 <path d="M20 420C80 440 140 490 190 560L160 570C110 510 60 470 20 460Z" fill="#2d5a85"/>
 <path d="M20 530C120 520 260 560 350 630L330 670C220 640 100 620 20 610Z" fill="#a9cfbd"/>
 <g fill="#cfe6dc"><ellipse cx="80" cy="555" rx="28" ry="14"/><ellipse cx="125" cy="610" rx="24" ry="12"/><ellipse cx="215" cy="600" rx="22" ry="11"/></g>
 <path d="M350 390C400 420 440 490 440 590L415 590C405 500 380 440 350 390Z" fill="#33648f"/>
 <path d="M530 440C600 430 630 500 615 550C590 580 540 570 520 540C510 500 510 460 530 440Z" fill="#7fb0c9"/>
 <path d="M470 570C560 530 680 520 760 520C720 580 650 640 560 660C520 640 490 610 470 570Z" fill="#a9cfbd"/>
 <g fill="#cfe6dc"><ellipse cx="610" cy="580" rx="22" ry="12"/><ellipse cx="700" cy="565" rx="18" ry="10"/><ellipse cx="575" cy="635" rx="14" ry="8"/></g>
 <path d="M20 660C60 640 100 640 140 665C180 640 230 635 270 660C300 650 340 650 380 670C420 640 470 640 520 650C570 590 640 565 720 575C790 590 830 650 850 745L20 745Z" fill="#1f4a7d"/>
 <g stroke="#9fc3dc" stroke-width="3" stroke-dasharray="2 10" fill="none" opacity=".8">
  <path d="M40 665C70 650 110 655 135 675M160 670C190 650 235 650 265 670M580 610C640 585 720 585 780 620M300 680C340 665 370 672 390 690"/>
 </g>
 <g fill="#e8733a">
  <ellipse cx="390" cy="580" rx="44" ry="36" transform="rotate(-20 390 580)"/>
  <ellipse cx="478" cy="585" rx="40" ry="34" transform="rotate(20 478 585)"/>
  <ellipse cx="362" cy="640" rx="45" ry="30" transform="rotate(10 362 640)"/>
  <ellipse cx="505" cy="645" rx="42" ry="32" transform="rotate(-10 505 645)"/>
  <ellipse cx="430" cy="685" rx="36" ry="34"/>
  <circle cx="432" cy="628" r="40"/>
 </g>
 <circle cx="432" cy="625" r="22" fill="#f3b237"/>
 <ellipse cx="810" cy="700" rx="45" ry="30" fill="#f1b23a" transform="rotate(-15 810 700)"/>
 <path d="M880 700C890 660 930 640 955 655C965 690 940 745 900 745Z" fill="#ef9c86"/>
 <path d="M860 745C900 680 960 660 1000 745Z" fill="#1f4a7d" opacity=".9"/>
</svg><svg style="left:482px;top:211px" width="180" height="160" viewBox="0 0 824 732">
 <g fill="#e0925a">
  <ellipse cx="352" cy="240" rx="22" ry="12" transform="rotate(25 352 240)"/>
  <ellipse cx="410" cy="225" rx="11" ry="22" transform="rotate(-10 410 225)"/>
  <ellipse cx="462" cy="265" rx="10" ry="20"/>
  <ellipse cx="522" cy="287" rx="12" ry="24" transform="rotate(-15 522 287)"/>
  <ellipse cx="347" cy="292" rx="22" ry="10" transform="rotate(-10 347 292)"/>
  <ellipse cx="402" cy="322" rx="25" ry="10" transform="rotate(-15 402 322)"/>
  <ellipse cx="445" cy="345" rx="24" ry="9" transform="rotate(-10 445 345)"/>
  <ellipse cx="586" cy="325" rx="10" ry="22" transform="rotate(-5 586 325)"/>
  <ellipse cx="635" cy="355" rx="10" ry="20" transform="rotate(10 635 355)"/>
  <ellipse cx="690" cy="410" rx="9" ry="18" transform="rotate(10 690 410)"/>
  <ellipse cx="537" cy="92" rx="8" ry="16" transform="rotate(-20 537 92)"/>
  <ellipse cx="585" cy="112" rx="8" ry="16" transform="rotate(20 585 112)"/>
  <ellipse cx="517" cy="135" rx="16" ry="8" transform="rotate(25 517 135)"/>
  <ellipse cx="535" cy="172" rx="17" ry="8" transform="rotate(15 535 172)"/>
  <ellipse cx="567" cy="208" rx="17" ry="8" transform="rotate(10 567 208)"/>
  <ellipse cx="625" cy="135" rx="9" ry="18" transform="rotate(-30 625 135)"/>
  <ellipse cx="628" cy="175" rx="8" ry="15" transform="rotate(-30 628 175)"/>
  <ellipse cx="645" cy="222" rx="8" ry="15" transform="rotate(20 645 222)"/>
  <ellipse cx="590" cy="265" rx="18" ry="8"/>
  <ellipse cx="652" cy="62" rx="10" ry="20" transform="rotate(10 652 62)"/>
  <ellipse cx="687" cy="35" rx="9" ry="18" transform="rotate(30 687 35)"/>
  <ellipse cx="722" cy="55" rx="20" ry="8" transform="rotate(-10 722 55)"/>
  <ellipse cx="715" cy="92" rx="20" ry="8" transform="rotate(-15 715 92)"/>
  <ellipse cx="705" cy="132" rx="20" ry="9" transform="rotate(-20 705 132)"/>
  <ellipse cx="705" cy="172" rx="20" ry="9" transform="rotate(-30 705 172)"/>
  <ellipse cx="718" cy="215" rx="20" ry="9" transform="rotate(-40 718 215)"/>
  <ellipse cx="610" cy="155" rx="8" ry="14" transform="rotate(-30 610 155)"/>
 </g>
 <g stroke="#dfeee8" stroke-width="3" stroke-dasharray="8 5" fill="none" opacity=".85">
  <path d="M640 330C600 270 600 180 640 80M660 110L700 90M620 220L700 170M560 140L620 170M600 260L660 280M680 300L700 340"/>
  <path d="M540 350C480 300 430 280 380 290M470 300L430 250"/>
 </g>
 <path d="M450 355C560 350 700 420 790 520L790 745L620 745C600 600 520 460 450 355Z" fill="#4f86a8"/>
 <path d="M700 345C740 330 790 360 800 420L790 560C740 520 700 440 700 345Z" fill="#5b93b3"/>
 <path d="M420 480C460 440 560 450 620 520C700 600 720 660 730 745L410 745C400 620 400 530 420 480Z" fill="#2e5780"/>
 <path d="M265 545C340 530 430 580 470 650L480 745L300 745C270 660 255 600 265 545Z" fill="#5f96b5"/>
 <path d="M380 550C420 540 460 580 470 650L470 745L400 745C380 650 370 600 380 550Z" fill="#6ea3c0"/>
 <path d="M150 590C190 580 230 600 240 625C290 610 320 650 330 745L170 745C150 690 140 660 160 640C140 620 135 600 150 590Z" fill="#4d84a8"/>
 <g stroke="#cfe3ee" stroke-width="3" fill="none" opacity=".8">
  <path d="M480 370C570 420 680 500 770 610M560 420L570 380M640 470L660 430M600 460L520 440M690 530L620 520"/>
  <path d="M480 470C520 560 560 640 600 745M520 560L470 560M560 620L500 610M530 520L540 480M580 590L600 540"/>
  <path d="M290 560C330 620 360 670 380 745M740 360C760 420 775 480 780 540"/>
 </g>
 <g fill="#f3b237"><path d="M740 540L790 520L790 600L720 610Z"/><path d="M710 650L790 610L790 680L730 690Z"/></g>
 <path d="M100 650L160 610M130 700L160 640" stroke="#b0553a" stroke-width="4" fill="none"/>
 <circle cx="65" cy="660" r="36" fill="#ef8f78"/>
 <circle cx="130" cy="715" r="30" fill="#ef8f78"/>
</svg><div class="t" style="left:0;width:653px;text-align:center;top:41px;font-size:29.5px;color:#111;-webkit-text-stroke:1.5px #111">二、什么是好的选题</div><div class="a" style="left:51.6px;top:115.6px;width:4.5px;height:4.5px;border-radius:50%;background:#f00"></div><div class="t" style="left:63px;top:104px;font-size:18.7px;color:#f00;-webkit-text-stroke:0.3px #f00">（一）能解决实际问题的选题就是好的选题</div><div class="a" style="left:51.6px;top:142.8px;width:4.5px;height:4.5px;border-radius:50%;background:#111"></div><div class="t" style="left:63px;top:131px;font-size:18.7px;color:#111;-webkit-text-stroke:0.3px #111">解决谁的问题？政府的问题，老百姓的问题。</div><div class="a" style="left:51.6px;top:170.0px;width:4.5px;height:4.5px;border-radius:50%;background:#111"></div><div class="t" style="left:63px;top:158px;font-size:18.7px;color:#111;-webkit-text-stroke:0.3px #111">选题要大气，正气。</div><div class="a" style="left:51.6px;top:197.2px;width:4.5px;height:4.5px;border-radius:50%;background:#f00"></div><div class="t" style="left:63px;top:185px;font-size:18.7px;color:#f00;-webkit-text-stroke:0.3px #f00">（二）选题要让人一目了然地能看懂</div><div class="a" style="left:51.6px;top:224.4px;width:4.5px;height:4.5px;border-radius:50%;background:#111"></div><div class="t" style="left:63px;top:212px;font-size:18.7px;color:#111;-webkit-text-stroke:0.3px #111">信息不对称、议价能力和寿险消费</div><div class="a" style="left:51.6px;top:251.6px;width:4.5px;height:4.5px;border-radius:50%;background:#f00"></div><div class="t" style="left:63px;top:239px;font-size:18.7px;color:#f00;-webkit-text-stroke:0.3px #f00">（三）选题要新</div><div class="a" style="left:51.6px;top:278.8px;width:4.5px;height:4.5px;border-radius:50%;background:#f00"></div><div class="t" style="left:63px;top:267px;font-size:18.7px;color:#f00;-webkit-text-stroke:0.3px #f00">（四）选题要有前瞻性</div></div>
<svg style="left:79px;top:683px" width="12" height="12"><path d="M0 6H11.5M5.75 .2V11.8" stroke="#444" stroke-width="1.3"/></svg>

<!-- left scrollbar -->
<div class="a" style="left:165px;top:419px;width:6px;height:83px;background:#ababab;border-radius:3px"></div>

<!-- ===== SLIDE ===== -->
<div class="a" style="left:176px;top:281px;width:806px;height:398px;overflow:hidden"><div class="a" style="left:62px;top:-12px;width:652.5px;height:368px;background:#b8d2a6;box-shadow:0 2px 6px rgba(0,0,0,.3)"></div></div>

<!-- slide art -->
<div class="a" style="left:226px;top:281px;width:664.5px;height:356px;overflow:hidden">
<svg style="left:0;top:214px" width="210" height="145" viewBox="0 0 1060 732">
 <g fill="#e0925a">
  <ellipse cx="85" cy="45" rx="9" ry="18" transform="rotate(-30 85 45)"/>
  <ellipse cx="118" cy="60" rx="8" ry="17" transform="rotate(10 118 60)"/>
  <ellipse cx="65" cy="85" rx="18" ry="8" transform="rotate(10 65 85)"/>
  <ellipse cx="145" cy="118" rx="8" ry="16" transform="rotate(30 145 118)"/>
  <ellipse cx="180" cy="98" rx="7" ry="14" transform="rotate(-20 180 98)"/>
  <ellipse cx="220" cy="80" rx="7" ry="13" transform="rotate(30 220 80)"/>
  <ellipse cx="75" cy="150" rx="17" ry="8" transform="rotate(20 75 150)"/>
  <ellipse cx="130" cy="155" rx="8" ry="15" transform="rotate(-30 130 155)"/>
  <ellipse cx="225" cy="140" rx="15" ry="7" transform="rotate(-10 225 140)"/>
  <ellipse cx="68" cy="188" rx="17" ry="8" transform="rotate(15 68 188)"/>
  <ellipse cx="130" cy="185" rx="7" ry="13" transform="rotate(10 130 185)"/>
  <ellipse cx="185" cy="215" rx="16" ry="7" transform="rotate(-5 185 215)"/>
  <ellipse cx="50" cy="285" rx="8" ry="22" transform="rotate(50 50 285)"/>
  <ellipse cx="140" cy="295" rx="7" ry="20" transform="rotate(5 140 295)"/>
  <ellipse cx="210" cy="330" rx="18" ry="7" transform="rotate(5 210 330)"/>
  <ellipse cx="400" cy="195" rx="9" ry="20" transform="rotate(30 400 195)"/>
  <ellipse cx="390" cy="238" rx="22" ry="8" transform="rotate(-5 390 238)"/>
  <ellipse cx="360" cy="372" rx="8" ry="18" transform="rotate(40 360 372)"/>
  <ellipse cx="322" cy="440" rx="7" ry="15" transform="rotate(-30 322 440)"/>
 </g>
 <g stroke="#dfeee8" stroke-width="3" stroke-dasharray="8 6" fill="none" opacity=".8">
  <path d="M60 330C90 250 110 180 110 90M110 170L200 140M100 120L150 80M100 200L180 215"/>
  <path d="M330 270L430 235"/>
 </g>
 <path d="M120 380C160 355 220 360 250 390C290 400 300 450 280 480C240 490 180 470 150 440C120 420 110 400 120 380Z" fill="#f1b23a"/>
 <path d="M20 330C120 360 250 440 345 610L300 625C220 500 120 420 20 390Z" fill="#2d5a85"/>
 <path d="M20 420C80 440 140 490 190 560L160 570C110 510 60 470 20 460Z" fill="#2d5a85"/>
 <path d="M20 530C120 520 260 560 350 630L330 670C220 640 100 620 20 610Z" fill="#a9cfbd"/>
 <g fill="#cfe6dc"><ellipse cx="80" cy="555" rx="28" ry="14"/><ellipse cx="125" cy="610" rx="24" ry="12"/><ellipse cx="215" cy="600" rx="22" ry="11"/></g>
 <path d="M350 390C400 420 440 490 440 590L415 590C405 500 380 440 350 390Z" fill="#33648f"/>
 <path d="M530 440C600 430 630 500 615 550C590 580 540 570 520 540C510 500 510 460 530 440Z" fill="#7fb0c9"/>
 <path d="M470 570C560 530 680 520 760 520C720 580 650 640 560 660C520 640 490 610 470 570Z" fill="#a9cfbd"/>
 <g fill="#cfe6dc"><ellipse cx="610" cy="580" rx="22" ry="12"/><ellipse cx="700" cy="565" rx="18" ry="10"/><ellipse cx="575" cy="635" rx="14" ry="8"/></g>
 <path d="M20 660C60 640 100 640 140 665C180 640 230 635 270 660C300 650 340 650 380 670C420 640 470 640 520 650C570 590 640 565 720 575C790 590 830 650 850 745L20 745Z" fill="#1f4a7d"/>
 <g stroke="#9fc3dc" stroke-width="3" stroke-dasharray="2 10" fill="none" opacity=".8">
  <path d="M40 665C70 650 110 655 135 675M160 670C190 650 235 650 265 670M580 610C640 585 720 585 780 620M300 680C340 665 370 672 390 690"/>
 </g>
 <g fill="#e8733a">
  <ellipse cx="390" cy="580" rx="44" ry="36" transform="rotate(-20 390 580)"/>
  <ellipse cx="478" cy="585" rx="40" ry="34" transform="rotate(20 478 585)"/>
  <ellipse cx="362" cy="640" rx="45" ry="30" transform="rotate(10 362 640)"/>
  <ellipse cx="505" cy="645" rx="42" ry="32" transform="rotate(-10 505 645)"/>
  <ellipse cx="430" cy="685" rx="36" ry="34"/>
  <circle cx="432" cy="628" r="40"/>
 </g>
 <circle cx="432" cy="625" r="22" fill="#f3b237"/>
 <ellipse cx="810" cy="700" rx="45" ry="30" fill="#f1b23a" transform="rotate(-15 810 700)"/>
 <path d="M880 700C890 660 930 640 955 655C965 690 940 745 900 745Z" fill="#ef9c86"/>
 <path d="M860 745C900 680 960 660 1000 745Z" fill="#1f4a7d" opacity=".9"/>
</svg>
<svg style="left:494px;top:199px" width="180" height="160" viewBox="0 0 824 732">
 <g fill="#e0925a">
  <ellipse cx="352" cy="240" rx="22" ry="12" transform="rotate(25 352 240)"/>
  <ellipse cx="410" cy="225" rx="11" ry="22" transform="rotate(-10 410 225)"/>
  <ellipse cx="462" cy="265" rx="10" ry="20"/>
  <ellipse cx="522" cy="287" rx="12" ry="24" transform="rotate(-15 522 287)"/>
  <ellipse cx="347" cy="292" rx="22" ry="10" transform="rotate(-10 347 292)"/>
  <ellipse cx="402" cy="322" rx="25" ry="10" transform="rotate(-15 402 322)"/>
  <ellipse cx="445" cy="345" rx="24" ry="9" transform="rotate(-10 445 345)"/>
  <ellipse cx="586" cy="325" rx="10" ry="22" transform="rotate(-5 586 325)"/>
  <ellipse cx="635" cy="355" rx="10" ry="20" transform="rotate(10 635 355)"/>
  <ellipse cx="690" cy="410" rx="9" ry="18" transform="rotate(10 690 410)"/>
  <ellipse cx="537" cy="92" rx="8" ry="16" transform="rotate(-20 537 92)"/>
  <ellipse cx="585" cy="112" rx="8" ry="16" transform="rotate(20 585 112)"/>
  <ellipse cx="517" cy="135" rx="16" ry="8" transform="rotate(25 517 135)"/>
  <ellipse cx="535" cy="172" rx="17" ry="8" transform="rotate(15 535 172)"/>
  <ellipse cx="567" cy="208" rx="17" ry="8" transform="rotate(10 567 208)"/>
  <ellipse cx="625" cy="135" rx="9" ry="18" transform="rotate(-30 625 135)"/>
  <ellipse cx="628" cy="175" rx="8" ry="15" transform="rotate(-30 628 175)"/>
  <ellipse cx="645" cy="222" rx="8" ry="15" transform="rotate(20 645 222)"/>
  <ellipse cx="590" cy="265" rx="18" ry="8"/>
  <ellipse cx="652" cy="62" rx="10" ry="20" transform="rotate(10 652 62)"/>
  <ellipse cx="687" cy="35" rx="9" ry="18" transform="rotate(30 687 35)"/>
  <ellipse cx="722" cy="55" rx="20" ry="8" transform="rotate(-10 722 55)"/>
  <ellipse cx="715" cy="92" rx="20" ry="8" transform="rotate(-15 715 92)"/>
  <ellipse cx="705" cy="132" rx="20" ry="9" transform="rotate(-20 705 132)"/>
  <ellipse cx="705" cy="172" rx="20" ry="9" transform="rotate(-30 705 172)"/>
  <ellipse cx="718" cy="215" rx="20" ry="9" transform="rotate(-40 718 215)"/>
  <ellipse cx="610" cy="155" rx="8" ry="14" transform="rotate(-30 610 155)"/>
 </g>
 <g stroke="#dfeee8" stroke-width="3" stroke-dasharray="8 5" fill="none" opacity=".85">
  <path d="M640 330C600 270 600 180 640 80M660 110L700 90M620 220L700 170M560 140L620 170M600 260L660 280M680 300L700 340"/>
  <path d="M540 350C480 300 430 280 380 290M470 300L430 250"/>
 </g>
 <path d="M450 355C560 350 700 420 790 520L790 745L620 745C600 600 520 460 450 355Z" fill="#4f86a8"/>
 <path d="M700 345C740 330 790 360 800 420L790 560C740 520 700 440 700 345Z" fill="#5b93b3"/>
 <path d="M420 480C460 440 560 450 620 520C700 600 720 660 730 745L410 745C400 620 400 530 420 480Z" fill="#2e5780"/>
 <path d="M265 545C340 530 430 580 470 650L480 745L300 745C270 660 255 600 265 545Z" fill="#5f96b5"/>
 <path d="M380 550C420 540 460 580 470 650L470 745L400 745C380 650 370 600 380 550Z" fill="#6ea3c0"/>
 <path d="M150 590C190 580 230 600 240 625C290 610 320 650 330 745L170 745C150 690 140 660 160 640C140 620 135 600 150 590Z" fill="#4d84a8"/>
 <g stroke="#cfe3ee" stroke-width="3" fill="none" opacity=".8">
  <path d="M480 370C570 420 680 500 770 610M560 420L570 380M640 470L660 430M600 460L520 440M690 530L620 520"/>
  <path d="M480 470C520 560 560 640 600 745M520 560L470 560M560 620L500 610M530 520L540 480M580 590L600 540"/>
  <path d="M290 560C330 620 360 670 380 745M740 360C760 420 775 480 780 540"/>
 </g>
 <g fill="#f3b237"><path d="M740 540L790 520L790 600L720 610Z"/><path d="M710 650L790 610L790 680L730 690Z"/></g>
 <path d="M100 650L160 610M130 700L160 640" stroke="#b0553a" stroke-width="4" fill="none"/>
 <circle cx="65" cy="660" r="36" fill="#ef8f78"/>
 <circle cx="130" cy="715" r="30" fill="#ef8f78"/>
</svg>
</div>
<div id="slideclip" class="a" style="left:200px;top:281px;width:720px;height:370px;overflow:hidden">
<div class="t" style="left:231.5px;top:29px;letter-spacing:-0.25px;font-size:29.5px;color:#111">二、什么是好的选题</div>
<div class="a" style="left:0;top:0;width:720px;font-size:18.7px;line-height:27.2px;white-space:nowrap">
<div class="t" style="left:101px;top:92px;color:#f00">（一）能解决实际问题的选题就是好的选题</div>
<div class="t" style="left:101px;top:119px;color:#111">解决谁的问题？政府的问题，老百姓的问题。</div>
<div class="t" style="left:101px;top:146px;color:#111">选题要大气，正气。</div>
<div class="t" style="left:101px;top:174px;color:#f00">（二）选题要让人一目了然地能看懂</div>
<div class="t" style="left:101px;top:201px;color:#111">信息不对称、议价能力和寿险消费</div>
<div class="t" style="left:101px;top:228px;color:#f00">（三）选题要新</div>
<div class="t" style="left:101px;top:255px;color:#f00">（四）选题要有前瞻性</div>
<div class="a" style="left:89.6px;top:96.8px;width:4.5px;height:4.5px;border-radius:50%;background:#f00"></div><div class="a" style="left:89.6px;top:124.2px;width:4.5px;height:4.5px;border-radius:50%;background:#111"></div><div class="a" style="left:89.6px;top:151.4px;width:4.5px;height:4.5px;border-radius:50%;background:#111"></div><div class="a" style="left:89.6px;top:178.4px;width:4.5px;height:4.5px;border-radius:50%;background:#f00"></div><div class="a" style="left:89.6px;top:206.4px;width:4.5px;height:4.5px;border-radius:50%;background:#111"></div><div class="a" style="left:89.6px;top:233.0px;width:4.5px;height:4.5px;border-radius:50%;background:#f00"></div><div class="a" style="left:89.6px;top:260.1px;width:4.5px;height:4.5px;border-radius:50%;background:#f00"></div>
</div>
</div>

<!-- notes -->
<div class="a" style="left:176px;top:679.5px;width:818px;height:1px;background:#dcdcdc"></div>
<svg style="left:182px;top:685px" width="13" height="11"><path d="M0 .8H12M0 4.5H12M0 8.5H7 M9.5 6.5V10.5M7.8 8.8L9.5 10.5L11.2 8.8" stroke="#555" fill="none" stroke-width="1"/></svg>
<div class="t ui" style="left:200px;top:687px;color:#666">单击此处添加备注</div>
<!-- right scrollbar + sidebar -->
<div class="a" style="left:982.5px;top:281px;width:11px;height:399px;background:#e0e0e0"></div>
<div class="a" style="left:993.5px;top:281px;width:1px;height:423px;background:#dedede"></div>
<div class="a" style="left:986px;top:291px;width:0;height:0;border-left:2px solid transparent;border-right:2px solid transparent;border-bottom:2px solid #666"></div>
<div class="a" style="left:982.5px;top:447px;width:10px;height:32px;background:#f2f2f2;border:1px solid #bcbcbc;border-radius:5px"></div>
<div class="a" style="left:986px;top:633px;width:0;height:0;border-left:2px solid transparent;border-right:2px solid transparent;border-top:2px solid #666"></div>
<svg style="left:985px;top:644px" width="6" height="7"><path d="M.5 3L3 .8L5.5 3M.5 6L3 3.8L5.5 6" stroke="#666" fill="none" stroke-width=".9"/></svg>
<svg style="left:985px;top:658px" width="6" height="7"><path d="M.5 1L3 3.2L5.5 1M.5 4L3 6.2L5.5 4" stroke="#666" fill="none" stroke-width=".9"/></svg>
<svg style="left:1004px;top:289px" width="13" height="4"><path d="M0 .5H12M0 3H12" stroke="#ccc" stroke-width="1"/></svg>
<svg style="left:1004px;top:309px" width="13" height="10"><circle cx="2" cy="2" r="1.5" stroke="#555" fill="none" stroke-width=".9"/><path d="M3.5 2H12 M0 7.5H7.5 M10.5 7.5H12.5" stroke="#555" stroke-width=".9"/><circle cx="9" cy="7.5" r="1.5" stroke="#555" fill="none" stroke-width=".9"/></svg>
<svg style="left:1004px;top:335px" width="13" height="15"><path d="M7 .8L8.7 4.5L12.3 5L9.6 7.5L10.3 11.3L7 9.5L3.7 11.3L4.4 7.5L1.7 5L5.3 4.5Z M3.5 10L.5 13.5" stroke="#555" fill="none" stroke-width=".9"/></svg>
<svg style="left:1004px;top:363px" width="14" height="13"><path d="M7 .8H.8V9.5H5 M3.5 8L5 9.5L3.5 11 M3 3H12.8V10.5H9" stroke="#555" fill="none" stroke-width=".9"/></svg>
<svg style="left:1004px;top:390px" width="13" height="13"><circle cx="6" cy="6" r="5.5" stroke="#555" fill="none" stroke-width=".9"/><path d="M4.2 4.5A1.8 1.8 0 1 1 6 6.5V7.8" stroke="#555" fill="none" stroke-width=".9"/><circle cx="6" cy="9.5" r=".6" fill="#555"/></svg>
<div class="a" style="left:1007px;top:431px;width:20px;height:50px;background:#5f5f5f;border-radius:5px 0 0 5px"></div>
<svg style="left:1014px;top:449px" width="6" height="14"><path d="M.5 .8L5 6.8L.5 12.8" stroke="#c4c4c4" fill="none" stroke-width="1.1"/></svg>
<div class="a" style="left:994px;top:671px;width:33px;height:1px;background:#dcdcdc"></div>
<svg style="left:1005px;top:688px" width="13" height="5"><circle cx="2" cy="2.3" r="1.6" stroke="#667" fill="none" stroke-width=".9"/><circle cx="6.5" cy="2.3" r="1.6" stroke="#667" fill="none" stroke-width=".9"/><circle cx="11" cy="2.3" r="1.6" stroke="#667" fill="none" stroke-width=".9"/></svg>
<!-- status bar -->
<div class="a" style="left:0;top:704px;width:1027px;height:25px;background:#f3f3f3"></div>
<div class="a" style="left:0;top:728.5px;width:1027px;height:4px;background:#202020"></div>
<div class="t ui" style="left:5px;top:713px;color:#444">幻灯片 9 / 17</div>
<div class="sep" style="left:69px;top:709px;height:16px"></div>
<div class="t ui" style="left:77px;top:713px;color:#444">Office 主题</div>
<div class="sep" style="left:133px;top:709px;height:16px"></div>
<svg style="left:147px;top:712px" width="11" height="10"><path d="M.5 .8H8M4.2 .8V9.5 M7 5.5A1.8 1.8 0 1 0 7.1 5.6" stroke="#555" fill="none" stroke-width="1"/><circle cx="8" cy="7.3" r="1.8" stroke="#555" fill="none" stroke-width=".9"/></svg>
<div class="t ui" style="left:160px;top:713px;color:#444">缺失字体</div>
<div class="sep" style="left:212px;top:709px;height:16px"></div>
<svg style="left:522px;top:711px" width="12" height="12"><path d="M5.5 .8L10.5 3.5V9L5.5 11.5L.8 9V3.5Z M.8 3.5L5.5 6.2L10.5 3.5 M5.5 6.2V11.5" stroke="#555" fill="none" stroke-width="1"/></svg>
<div class="t ui" style="left:536px;top:713px;color:#444">智能美化</div>
<div class="a" style="left:579px;top:716px;width:0;height:0;border-left:2px solid transparent;border-right:2px solid transparent;border-bottom:2px solid #555"></div>
<div class="sep" style="left:591px;top:709px;height:16px"></div>
<svg style="left:603px;top:712px" width="13" height="10"><path d="M0 .8H6M0 4.5H12M0 8.5H12 M8 2L9.5 .5L11 2" stroke="#555" fill="none" stroke-width="1"/></svg>
<div class="t ui" style="left:616px;top:713px;color:#444">备注</div>
<div class="dd" style="left:639px;top:717px"></div>
<svg style="left:649px;top:711px" width="13" height="12"><path d="M3 2H.8V11.2H11.2V4 M3 5.5H9M3 8.2H9" stroke="#555" fill="none" stroke-width="1"/><path d="M3 .5H6M4.5 -1V3" stroke="#e0905a" stroke-width="1"/></svg>
<div class="t ui" style="left:663px;top:713px;color:#444">批注</div>
<div class="sep" style="left:693px;top:709px;height:16px"></div>
<div class="a" style="left:701px;top:709px;width:17px;height:16px;background:#d6d6d6;border-radius:2px"></div>
<svg style="left:704px;top:712px" width="11" height="10"><path d="M.5 .5H10.5V9.5H.5Z M3.5 .5V9.5" stroke="#444" fill="none" stroke-width="1"/></svg>
<svg style="left:723px;top:712px" width="11" height="10"><rect x=".5" y=".5" width="4" height="3.5" stroke="#555" fill="none" stroke-width=".9"/><rect x="6.5" y=".5" width="4" height="3.5" stroke="#555" fill="none" stroke-width=".9"/><rect x=".5" y="6" width="4" height="3.5" stroke="#555" fill="none" stroke-width=".9"/><rect x="6.5" y="6" width="4" height="3.5" stroke="#555" fill="none" stroke-width=".9"/></svg>
<svg style="left:742px;top:712px" width="12" height="10"><path d="M.5 .8H5L6 1.8L7 .8H11.5V9.5H7L6 8.5L5 9.5H.5Z M6 1.8V8.5" stroke="#555" fill="none" stroke-width="1"/></svg>
<div class="sep" style="left:765px;top:709px;height:16px"></div>
<div class="a" style="left:773px;top:708px;width:23px;height:18px;background:#ef6b45;border-radius:2px"></div>
<svg style="left:780px;top:711px" width="10" height="12"><path d="M1 .5L9 6L1 11.5Z" fill="#fff"/></svg>
<div class="dd" style="left:801px;top:717px;border-top-color:#888"></div>
<div class="sep" style="left:813px;top:709px;height:16px"></div>
<svg style="left:824px;top:711px" width="12" height="12"><path d="M.8 3.5V.8H3.5M8.5 .8H11.2V3.5M11.2 8.5V11.2H8.5M3.5 11.2H.8V8.5" stroke="#555" fill="none" stroke-width="1"/><rect x="3" y="3" width="6" height="6" stroke="#555" fill="none" stroke-width="1"/></svg>
<div class="t ui" style="left:841px;top:713px;color:#444">67%</div>
<div class="dd" style="left:865px;top:717px;border-top-color:#888"></div>
<svg style="left:877px;top:716px" width="8" height="2"><path d="M0 .8H7" stroke="#333" stroke-width="1.2"/></svg>
<div class="a" style="left:894px;top:716.5px;width:105px;height:1px;background:#aaa"></div>
<div class="a" style="left:948px;top:714px;width:1px;height:5px;background:#aaa"></div>
<div class="a" style="left:921px;top:711.5px;width:10px;height:10px;border-radius:50%;background:#f7f7f7;border:1px solid #555"></div>
<svg style="left:1006px;top:712px" width="9" height="9"><path d="M0 4.5H8.5M4.25 0V8.5" stroke="#333" stroke-width="1.3"/></svg>

<!-- right panel -->
<div class="a" style="left:1027px;top:25px;width:104px;height:707px;background:linear-gradient(90deg,#1b1b1c 0,#1b1b1c 3px,#45474b 4px,#3a3c40 12px,#34363a 60px,#323438 104px)"></div>
<div class="a" style="left:1030px;top:25px;width:101px;height:73px;background:linear-gradient(170deg,#000 0%,#0c0d0e 50%,#161719 100%)"></div>
<!-- tile1 speaker -->
<div class="a" style="left:1037px;top:115px;width:110px;height:124px;border:2px solid #1fc45f;border-radius:4px;background:#1c1d1f"></div>
<div class="a" style="left:1121px;top:143px;width:46px;height:45px;border-radius:50%;background:linear-gradient(90deg,rgba(0,0,0,0) 0,rgba(0,0,0,0) 6px,#c8c0e0 7px,#a89cc8 10px),linear-gradient(#5a4a5a 0%,#4a3a48 45%,#2f5a35 70%,#1a3a20 100%);background-blend-mode:normal"></div>
<div class="a" style="left:1039px;top:211px;width:92px;height:25px;background:#0c0d0d"></div>
<svg style="left:1041px;top:214px" width="19" height="19"><rect x=".5" y=".5" width="17" height="12.5" rx="2.5" fill="#eee"/><path d="M4.5 10C5 6.5 8 5 11.5 5M10 3L12.5 5L10 7" stroke="#111" stroke-width="1.5" fill="none"/><path d="M3.5 18.5C4 16.5 14 16.5 14.5 18.5Z" fill="#eee"/></svg>
<svg style="left:1067px;top:213px" width="17" height="20"><rect x="4.2" y=".5" width="7.6" height="13" rx="3.8" fill="#eee"/><path d="M4.2 8.5H11.8V9.7A3.8 3.8 0 0 1 4.2 9.7Z" fill="#3ee04a"/><path d="M1.2 8.5A6.8 6.8 0 0 0 14.8 8.5M8 15.5V19" stroke="#eee" stroke-width="1.8" fill="none"/></svg>
<div class="t" style="left:1089px;top:216px;font-size:14px;color:#f2f2f2">冯文丽(</div>
<div class="a" style="left:1025px;top:625px;width:3px;height:15px;background:#2a2c33"></div>
<!-- tooltip -->
<div class="a" style="left:1002px;top:98px;width:140px;height:45px;background:#3c3f44"></div>
<div class="t" style="left:1017px;top:112.5px;font-size:15.2px;color:#fff;transform:scaleY(0.86);transform-origin:0 50%;letter-spacing:-0.1px">正在讲话: 冯文丽,</div>
<!-- tile2 -->
<div class="a" style="left:1037.5px;top:249.5px;width:110px;height:132px;border:2.5px solid #4a4c50;border-radius:5px;background:#232426"></div>
<div class="a" style="left:1121px;top:282px;width:46px;height:46px;border-radius:50%;border-left:2px solid #f0f0f0;background:linear-gradient(#e8eef5 0%,#dfe8f2 15%,#3a7ac8 25%,#2e6ab5 55%,#d8e4f0 62%,#6b4a30 75%,#4a8a30 85%,#3a7a28 100%)"></div>
<div class="a" style="left:1040px;top:352px;width:74px;height:25px;background:#0c0d0d"></div>
<svg style="left:1046px;top:355px" width="18" height="19"><rect x="5.5" y=".5" width="7" height="11.5" rx="3.5" fill="#eee"/><path d="M2.3 8A6.7 6.7 0 0 0 15.7 8M9 14.5V18" stroke="#eee" stroke-width="1.6" fill="none"/><path d="M2 17L16 2.5" stroke="#e53c3c" stroke-width="1.7"/></svg>
<div class="t" style="left:1069px;top:357.5px;font-size:14px;color:#f2f2f2">科研处</div>
<!-- tile3 -->
<div class="a" style="left:1037.5px;top:390.5px;width:110px;height:131px;border:2.5px solid #4a4c50;border-radius:5px;background:#232426"></div>
<div class="a" style="left:1121px;top:422px;width:48px;height:48px;border-radius:50%;background:#0a72ff"></div>
<div class="a" style="left:1040px;top:493px;width:91px;height:25px;background:#0c0d0d"></div>
<svg style="left:1046px;top:496px" width="18" height="19"><rect x="5.5" y=".5" width="7" height="11.5" rx="3.5" fill="#eee"/><path d="M2.3 8A6.7 6.7 0 0 0 15.7 8M9 14.5V18" stroke="#eee" stroke-width="1.6" fill="none"/><path d="M2 17L16 2.5" stroke="#e53c3c" stroke-width="1.7"/></svg>
<div class="t" style="left:1069px;top:498px;font-size:14px;color:#f2f2f2">130****71</div>
<!-- tile4 -->
<div class="a" style="left:1037.5px;top:531.5px;width:110px;height:131px;border:2.5px solid #4a4c50;border-radius:5px;background:#232426"></div>
<div class="a" style="left:1121px;top:564px;width:46px;height:46px;border-radius:50%;border-left:2px solid #f4f4f4;background:radial-gradient(circle at 60% 40%,#8fc060,#5a9a38 45%,#2f6a25 80%,#1f4a1a)"></div>
<div class="a" style="left:1040px;top:634px;width:42px;height:25px;background:#0c0d0d"></div>
<div class="t" style="left:1046px;top:639px;font-size:14px;color:#f2f2f2">avon</div>
<!-- tile5 -->
<div class="a" style="left:1037.5px;top:673px;width:110px;height:80px;border:2.5px solid #4a4c50;border-radius:5px;background:#232426"></div>
<div class="a" style="left:1121px;top:705px;width:48px;height:48px;border-radius:50%;background:#0a62e6"></div>

</body></html>
